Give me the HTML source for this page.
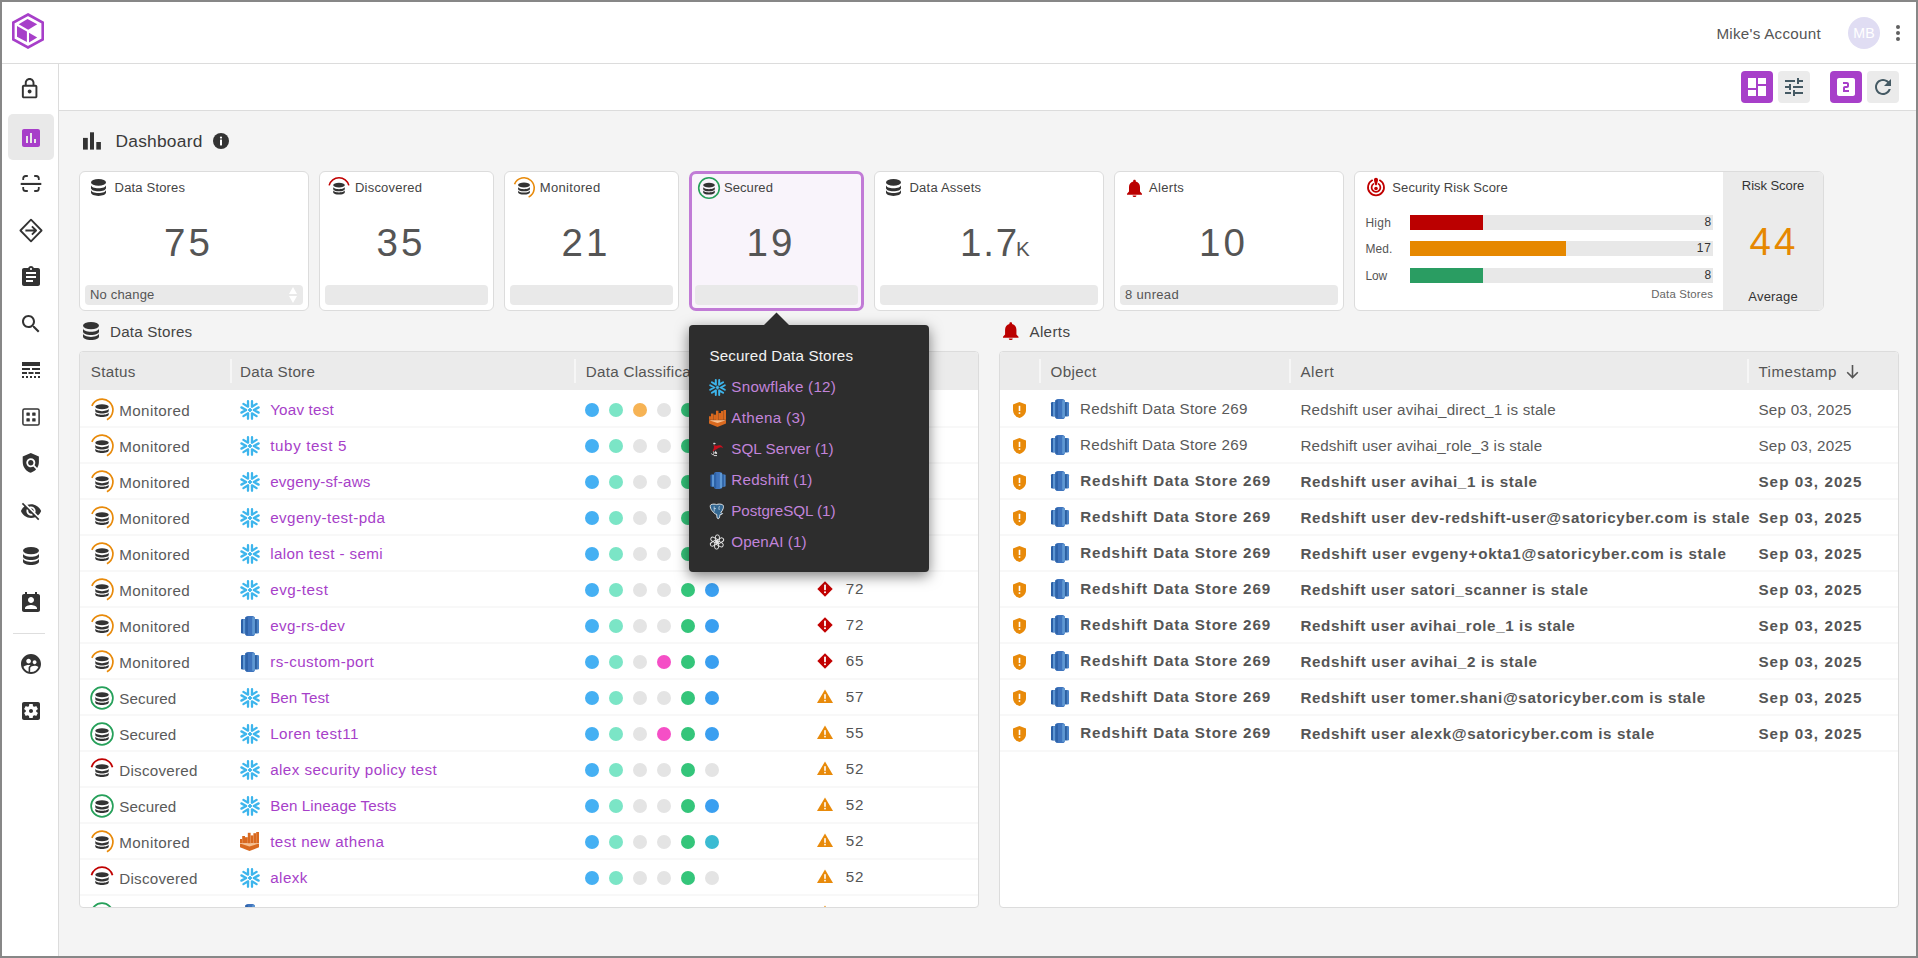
<!DOCTYPE html><html><head><meta charset="utf-8"><title>Dashboard</title><style>*{box-sizing:border-box;margin:0;padding:0}html,body{width:1918px;height:958px;overflow:hidden}body{position:relative;font-family:"Liberation Sans",sans-serif;background:#fff;color:#444;-webkit-font-smoothing:antialiased}.a{position:absolute}.t{white-space:nowrap}svg.a{overflow:visible}</style></head><body><div class="a" style="left:59px;top:111px;width:1859px;height:847px;background:#f4f4f4;"></div><div class="a" style="left:0px;top:63px;width:1918px;height:1px;background:#dcdcdc;"></div><div class="a" style="left:58px;top:64px;width:1px;height:894px;background:#dcdcdc;"></div><div class="a" style="left:59px;top:110px;width:1859px;height:1px;background:#dcdcdc;"></div><svg class="a" style="left:12px;top:13px;" width="32" height="36" viewBox="0 0 32 36"><path d="M16 1.5L30.7 9.6V26.4L16 34.5 1.3 26.4V9.6z" fill="none" stroke="#a73fc9" stroke-width="2.6" stroke-linejoin="miter"/><g fill="#a73fc9"><path d="M6.7 11.3L15.5 6 25.2 11.3 16.2 16.7z"/><path d="M5 13L14.9 18.5V29L5 23.75z"/><path d="M17 19.8L25.2 24.4 17 29.5z"/></g></svg><div class="a t" style="top:23.83px;font-size:15.2px;line-height:20px;color:#555;letter-spacing:0.268px;left:1716.4px;">Mike's Account</div><div class="a" style="left:1848px;top:17px;width:32px;height:32px;background:#e0ddf3;border-radius:50%;"></div><div class="a t" style="top:24.28px;font-size:14.2px;line-height:18px;color:#fff;left:1844.00px;width:40px;text-align:center;">MB</div><div class="a" style="left:1896px;top:24.8px;width:4px;height:4px;background:#606060;border-radius:50%;"></div><div class="a" style="left:1896px;top:31px;width:4px;height:4px;background:#606060;border-radius:50%;"></div><div class="a" style="left:1896px;top:37.1px;width:4px;height:4px;background:#606060;border-radius:50%;"></div><div class="a" style="left:1741px;top:71px;width:32px;height:32px;background:#a73fc9;border-radius:4px;"></div><svg class="a" style="left:1745px;top:75.3px" width="24.00" height="24.00" viewBox="0 0 24 24"><path d="M3 13h8V3H3v10zm0 8h8v-6H3v6zm10 0h8V11h-8v10zm0-18v6h8V3h-8z" fill="#fff"/></svg><div class="a" style="left:1778px;top:71px;width:32px;height:32px;background:#ebebeb;border-radius:4px;"></div><svg class="a" style="left:1782px;top:75px" width="24.00" height="24.00" viewBox="0 0 24 24"><path d="M3 17v2h6v-2H3zM3 5v2h10V5H3zm10 16v-2h8v-2h-8v-2h-2v6h2zM7 9v2H3v2h4v2h2V9H7zm14 4v-2H11v2h10zm-6-4h2V7h4V5h-4V3h-2v6z" fill="#455a64"/></svg><div class="a" style="left:1830px;top:71px;width:32px;height:32px;background:#a73fc9;border-radius:4px;"></div><svg class="a" style="left:1834px;top:75.3px" width="24.00" height="24.00" viewBox="0 0 24 24"><path d="M19 3H5c-1.1 0-1.99.9-1.99 2L3 19c0 1.1.9 2 2 2h14c1.1 0 2-.9 2-2V5c0-1.1-.9-2-2-2zm-4 8c0 1.11-.9 2-2 2h-2v2h4v2H9v-4c0-1.11.9-2 2-2h2V9H9V7h4c1.1 0 2 .89 2 2v2z" fill="#fff"/></svg><div class="a" style="left:1867px;top:71px;width:32px;height:32px;background:#ebebeb;border-radius:4px;"></div><svg class="a" style="left:1870.75px;top:75px" width="24.00" height="24.00" viewBox="0 0 24 24"><path d="M17.65 6.35C16.2 4.9 14.21 4 12 4c-4.42 0-7.99 3.58-7.99 8s3.57 8 7.99 8c3.73 0 6.84-2.55 7.73-6h-2.08c-.82 2.33-3.04 4-5.65 4-3.31 0-6-2.69-6-6s2.69-6 6-6c1.66 0 3.14.69 4.22 1.78L13 11h7V4l-2.35 2.35z" fill="#455a64"/></svg><div class="a" style="left:8px;top:114px;width:46px;height:46px;background:#e9e9e9;border-radius:5px;"></div><svg class="a" style="left:18.2px;top:77.2px" width="23.28" height="23.28" viewBox="0 0 24 24"><path d="M18 8h-1V6c0-2.76-2.24-5-5-5S7 3.24 7 6v2H6c-1.1 0-2 .9-2 2v10c0 1.1.9 2 2 2h12c1.1 0 2-.9 2-2V10c0-1.1-.9-2-2-2zM9 6c0-1.66 1.34-3 3-3s3 1.34 3 3v2H9V6zm9 14H6V10h12v10zm-6-3c1.1 0 2-.9 2-2s-.9-2-2-2-2 .9-2 2 .9 2 2 2z" fill="#333"/></svg><svg class="a" style="left:19px;top:126px" width="24.00" height="24.00" viewBox="0 0 24 24"><path d="M19 3H5c-1.1 0-2 .9-2 2v14c0 1.1.9 2 2 2h14c1.1 0 2-.9 2-2V5c0-1.1-.9-2-2-2zM9 17H7v-7h2v7zm4 0h-2V7h2v10zm4 0h-2v-4h2v4z" fill="#a73fc9"/></svg><svg class="a" style="left:20px;top:174px;" width="22" height="20" viewBox="0 0 22 20"><g fill="none" stroke="#333" stroke-width="1.8" stroke-linecap="butt"><path d="M3.2 6V4.6a2.6 2.6 0 0 1 2.6-2.6h2"/><path d="M14.2 2h2a2.6 2.6 0 0 1 2.6 2.6V6"/><path d="M3.2 13v1.4a2.6 2.6 0 0 0 2.6 2.6h2"/><path d="M14.2 17h2a2.6 2.6 0 0 0 2.6-2.6V13"/></g><rect x="0.7" y="8.9" width="20.6" height="2.1" fill="#333"/></svg><svg class="a" style="left:19px;top:218px;" width="24" height="26" viewBox="0 0 24 26"><g fill="none" stroke="#333" stroke-width="1.8" stroke-linejoin="round" stroke-linecap="butt"><path d="M12 1.6L22.6 12.5 12 23.4 1.4 12.5z"/><path d="M6.4 12.5h10.4M12.9 8.3l4.2 4.2-4.2 4.2"/></g></svg><svg class="a" style="left:19px;top:265px" width="24.00" height="24.00" viewBox="0 0 24 24"><path d="M19 3h-4.18C14.4 1.84 13.3 1 12 1c-1.3 0-2.4.84-2.82 2H5c-1.1 0-2 .9-2 2v14c0 1.1.9 2 2 2h14c1.1 0 2-.9 2-2V5c0-1.1-.9-2-2-2zm-7 0c.55 0 1 .45 1 1s-.45 1-1 1-1-.45-1-1 .45-1 1-1zm2 14H7v-2h7v2zm3-4H7v-2h10v2zm0-4H7V7h10v2z" fill="#333"/></svg><svg class="a" style="left:18.8px;top:311.8px" width="24.00" height="24.00" viewBox="0 0 24 24"><path d="M15.5 14h-.79l-.28-.27C15.41 12.59 16 11.11 16 9.5 16 5.91 13.09 3 9.5 3S3 5.91 3 9.5 5.91 16 9.5 16c1.61 0 3.09-.59 4.23-1.57l.27.28v.79l5 4.99L20.49 19l-4.99-5zm-6 0C7.01 14 5 11.99 5 9.5S7.01 5 9.5 5 14 7.01 14 9.5 11.99 14 9.5 14z" fill="#333"/></svg><svg class="a" style="left:19px;top:358px" width="24.00" height="24.00" viewBox="0 0 24 24"><path d="M3 16h5v-2H3v2zm6.5 0h5v-2h-5v2zm6.5 0h5v-2h-5v2zM3 20h2v-2H3v2zm4 0h2v-2H7v2zm4 0h2v-2h-2v2zm4 0h2v-2h-2v2zm4 0h2v-2h-2v2zM3 12h8v-2H3v2zm10 0h8v-2h-8v2zM3 4v4h18V4H3z" fill="#333"/></svg><svg class="a" style="left:21px;top:407px;" width="20" height="20" viewBox="0 0 20 20"><rect x="1.9" y="1.9" width="16.2" height="16.2" rx="1.6" fill="none" stroke="#333" stroke-width="1.5"/><g fill="#333"><rect x="5.4" y="5.4" width="3.4" height="3.4" rx="0.6"/><rect x="11.2" y="5.4" width="3.4" height="3.4" rx="0.6"/><rect x="5.4" y="11.2" width="3.4" height="3.4" rx="0.6"/><rect x="11.2" y="11.2" width="3.4" height="3.4" rx="0.6"/></g></svg><svg class="a" style="left:20.1px;top:451.9px" width="21.60" height="21.60" viewBox="0 0 24 24"><path d="M21 5l-9-4-9 4v6c0 5.55 3.84 10.74 9 12 2.3-.56 4.33-1.9 5.88-3.71l-3.12-3.12c-1.94 1.29-4.58 1.07-6.29-.64-1.95-1.95-1.95-5.12 0-7.07 1.95-1.95 5.12-1.95 7.07 0 1.71 1.71 1.92 4.35.64 6.29l2.9 2.9C20.29 15.69 21 13.38 21 11V5zM12 15c1.66 0 3-1.34 3-3s-1.34-3-3-3-3 1.34-3 3 1.34 3 3 3z" fill="#333"/></svg><svg class="a" style="left:19.8px;top:499.5px" width="22.08" height="22.08" viewBox="0 0 24 24"><path d="M12 7c2.76 0 5 2.24 5 5 0 .65-.13 1.26-.36 1.83l2.92 2.92c1.51-1.26 2.7-2.89 3.43-4.75-1.73-4.39-6-7.5-10.99-7.5-1.4 0-2.74.25-3.98.7l2.16 2.16C10.74 7.13 11.35 7 12 7zM2 4.27l2.28 2.28.46.46C3.08 8.3 1.78 10.02 1 12c1.730 4.39 6 7.5 11 7.5 1.55 0 3.03-.3 4.38-.84l.42.42L19.73 22 21 20.73 3.27 3 2 4.27zM7.53 9.8l1.55 1.55c-.05.21-.08.43-.08.65 0 1.66 1.34 3 3 3 .22 0 .44-.03.65-.08l1.55 1.55c-.67.33-1.41.53-2.2.53-2.760 0-5-2.24-5-5 0-.79.2-1.53.53-2.2zm4.31-.78l3.15 3.150.02-.16c0-1.66-1.34-3-3-3l-.17.01z" fill="#333"/></svg><svg class="a" style="left:23px;top:547px;" width="16" height="18" viewBox="0 0 16 18"><g fill="#333"><ellipse cx="8" cy="3.6" rx="8" ry="3.6"/><path d="M0 6.2v3.3c0 2 3.6 3.6 8 3.6s8-1.6 8-3.6V6.2c0 2-3.6 3.6-8 3.6S0 8.2 0 6.2z"/><path d="M0 11.3v3.1c0 2 3.6 3.6 8 3.6s8-1.6 8-3.6v-3.1c0 2-3.6 3.6-8 3.6S0 13.3 0 11.3z"/></g></svg><svg class="a" style="left:19px;top:590.8px" width="24.00" height="24.00" viewBox="0 0 24 24"><path d="M19 3h-1V1h-2v2H8V1H6v2H5c-1.11 0-2 .9-2 2v14c0 1.1.89 2 2 2h14c1.1 0 2-.9 2-2V5c0-1.1-.9-2-2-2zm-7 3c1.66 0 3 1.34 3 3s-1.34 3-3 3-3-1.34-3-3 1.34-3 3-3zm6 12H6v-1c0-2 4-3.1 6-3.1s6 1.1 6 3.1v1z" fill="#333"/></svg><div class="a" style="left:13px;top:633px;width:32px;height:1px;background:#dedede;"></div><svg class="a" style="left:19px;top:651.9px" width="24.00" height="24.00" viewBox="0 0 24 24"><path d="M11.99 2c-5.52 0-10 4.48-10 10s4.48 10 10 10 10-4.48 10-10-4.48-10-10-10zm3.61 6.34c1.07 0 1.930.86 1.93 1.93 0 1.07-.86 1.93-1.93 1.93-1.07 0-1.93-.86-1.93-1.93-.01-1.07.86-1.93 1.93-1.93zm-6-1.58c1.3 0 2.36 1.06 2.36 2.36 0 1.3-1.06 2.36-2.36 2.36s-2.36-1.06-2.36-2.36c0-1.31 1.05-2.36 2.36-2.36zm0 9.13v3.75c-2.4-.75-4.3-2.6-5.14-4.96 1.05-1.12 3.670-1.69 5.14-1.69.53 0 1.2.08 1.9.22-1.64.87-1.9 2.02-1.9 2.68zM11.99 20c-.27 0-.53-.01-.79-.04v-4.07c0-1.42 2.94-2.13 4.4-2.13 1.07 0 2.92.39 3.84 1.15-1.17 2.96-4.05 5.060-7.45 5.09z" fill="#333"/></svg><svg class="a" style="left:19px;top:699px" width="24.00" height="24.00" viewBox="0 0 24 24"><path d="M12 10c-1.1 0-2 .9-2 2s.9 2 2 2 2-.9 2-2-.9-2-2-2zm7-7H5c-1.11 0-2 .9-2 2v14c0 1.1.89 2 2 2h14c1.11 0 2-.9 2-2V5c0-1.1-.89-2-2-2zm-1.75 9c0 .23-.02.46-.05.68l1.48 1.16c.13.11.17.3.08.45l-1.4 2.42c-.09.15-.27.21-.43.15l-1.74-.7c-.36.28-.76.51-1.18.69l-.26 1.85c-.03.17-.18.3-.35.3h-2.8c-.17 0-.32-.13-.35-.29l-.26-1.85c-.43-.18-.82-.41-1.18-.69l-1.74.7c-.16.06-.34 0-.43-.15l-1.4-2.42c-.09-.15-.05-.34.08-.45l1.48-1.16c-.03-.23-.05-.46-.05-.69 0-.23.02-.46.05-.68l-1.48-1.16c-.13-.11-.17-.3-.08-.45l1.4-2.42c.09-.15.27-.21.43-.15l1.74.7c.36-.28.76-.51 1.18-.69l.26-1.85c.03-.17.18-.3.35-.3h2.8c.17 0 .32.13.35.29l.26 1.85c.43.18.82.41 1.18.69l1.74-.7c.16-.06.34 0 .43.15l1.4 2.42c.09.15.05.34-.08.45l-1.48 1.16c.03.23.05.46.05.69z" fill="#333"/></svg><svg class="a" style="left:83px;top:132px;" width="18" height="18" viewBox="0 0 18 18"><g fill="#333"><rect x="0" y="5.9" width="4.8" height="11.7"/><rect x="7" y="0.3" width="4" height="17.3"/><rect x="13.3" y="10" width="4.6" height="7.6"/></g></svg><div class="a t" style="top:129.78px;font-size:17.38px;line-height:23px;color:#3a3a3a;letter-spacing:0.234px;left:115.5px;">Dashboard</div><svg class="a" style="left:213px;top:132.8px;" width="16" height="16" viewBox="0 0 16 16"><circle cx="8" cy="8" r="8" fill="#333"/><rect x="7" y="6.6" width="2" height="5.8" rx="0.4" fill="#fff"/><circle cx="8" cy="4.6" r="1.1" fill="#fff"/></svg><div class="a" style="left:79px;top:171px;width:230px;height:140px;background:#fff;border:1px solid #dcdcdc;border-radius:6px;"></div><svg class="a" style="left:91px;top:179px;" width="15" height="17" viewBox="0 0 16 18"><g fill="#333"><ellipse cx="8" cy="3.6" rx="8" ry="3.6"/><path d="M0 6.2v3.3c0 2 3.6 3.6 8 3.6s8-1.6 8-3.6V6.2c0 2-3.6 3.6-8 3.6S0 8.2 0 6.2z"/><path d="M0 11.3v3.1c0 2 3.6 3.6 8 3.6s8-1.6 8-3.6v-3.1c0 2-3.6 3.6-8 3.6S0 13.3 0 11.3z"/></g></svg><div class="a t" style="top:179.19px;font-size:13.03px;line-height:17px;color:#444;letter-spacing:0.17px;left:114.6px;">Data Stores</div><div class="a t" style="top:217.65px;font-size:38.52px;line-height:50px;color:#555;letter-spacing:2.969px;left:127.00px;width:120px;text-align:center;text-indent:2.969px;">75</div><div class="a" style="left:85px;top:285px;width:218px;height:20px;background:#e9e9e9;border-radius:4px;"></div><div class="a t" style="top:285.99px;font-size:13.03px;line-height:17px;color:#555;letter-spacing:0.166px;left:90px;">No change</div><div class="a" style="left:319px;top:171px;width:175px;height:140px;background:#fff;border:1px solid #dcdcdc;border-radius:6px;"></div><svg class="a" style="left:325.7px;top:175.0px;" width="26" height="26" viewBox="0 0 26 26"><path d="M3.15 10.36A10.2 10.2 0 0 1 22.85 10.36" fill="none" stroke="#c00000" stroke-width="1.6"/><g transform="translate(7.20 7.70) scale(0.725 0.656)" fill="#333"><ellipse cx="8" cy="3.6" rx="8" ry="3.6"/><path d="M0 6.2v3.3c0 2 3.6 3.6 8 3.6s8-1.6 8-3.6V6.2c0 2-3.6 3.6-8 3.6S0 8.2 0 6.2z"/><path d="M0 11.3v3.1c0 2 3.6 3.6 8 3.6s8-1.6 8-3.6v-3.1c0 2-3.6 3.6-8 3.6S0 13.3 0 11.3z"/></g></svg><div class="a t" style="top:179.19px;font-size:13.03px;line-height:17px;color:#444;letter-spacing:0.201px;left:355px;">Discovered</div><div class="a t" style="top:217.65px;font-size:38.52px;line-height:50px;color:#555;letter-spacing:2.969px;left:339.50px;width:120px;text-align:center;text-indent:2.969px;">35</div><div class="a" style="left:325px;top:285px;width:163px;height:20px;background:#e9e9e9;border-radius:4px;"></div><div class="a" style="left:504px;top:171px;width:175px;height:140px;background:#fff;border:1px solid #dcdcdc;border-radius:6px;"></div><svg class="a" style="left:510.70000000000005px;top:174.5px;" width="26" height="26" viewBox="0 0 26 26"><path d="M3.54 9.18A10.2 10.2 0 1 1 17.63 22.09" fill="none" stroke="#e88a0a" stroke-width="1.6"/><g transform="translate(7.10 7.60) scale(0.738 0.667)" fill="#333"><ellipse cx="8" cy="3.6" rx="8" ry="3.6"/><path d="M0 6.2v3.3c0 2 3.6 3.6 8 3.6s8-1.6 8-3.6V6.2c0 2-3.6 3.6-8 3.6S0 8.2 0 6.2z"/><path d="M0 11.3v3.1c0 2 3.6 3.6 8 3.6s8-1.6 8-3.6v-3.1c0 2-3.6 3.6-8 3.6S0 13.3 0 11.3z"/></g></svg><div class="a t" style="top:179.19px;font-size:13.03px;line-height:17px;color:#444;letter-spacing:0.309px;left:539.8px;">Monitored</div><div class="a t" style="top:217.65px;font-size:38.52px;line-height:50px;color:#555;letter-spacing:2.969px;left:524.50px;width:120px;text-align:center;text-indent:2.969px;">21</div><div class="a" style="left:510px;top:285px;width:163px;height:20px;background:#e9e9e9;border-radius:4px;"></div><div class="a" style="left:689px;top:171px;width:175px;height:140px;background:#f9f4fb;border:3px solid #c17bd6;border-radius:7px;"></div><svg class="a" style="left:695.8px;top:175.0px;" width="26" height="26" viewBox="0 0 26 26"><circle cx="13.0" cy="13.0" r="10.3" fill="none" stroke="#26a05a" stroke-width="1.6"/><g transform="translate(7.20 7.70) scale(0.725 0.656)" fill="#333"><ellipse cx="8" cy="3.6" rx="8" ry="3.6"/><path d="M0 6.2v3.3c0 2 3.6 3.6 8 3.6s8-1.6 8-3.6V6.2c0 2-3.6 3.6-8 3.6S0 8.2 0 6.2z"/><path d="M0 11.3v3.1c0 2 3.6 3.6 8 3.6s8-1.6 8-3.6v-3.1c0 2-3.6 3.6-8 3.6S0 13.3 0 11.3z"/></g></svg><div class="a t" style="top:179.19px;font-size:13.03px;line-height:17px;color:#444;letter-spacing:0.065px;left:724px;">Secured</div><div class="a t" style="top:217.65px;font-size:38.52px;line-height:50px;color:#555;letter-spacing:2.969px;left:709.50px;width:120px;text-align:center;text-indent:2.969px;">19</div><div class="a" style="left:695px;top:285px;width:163px;height:20px;background:#e9e9e9;border-radius:4px;"></div><div class="a" style="left:874px;top:171px;width:230px;height:140px;background:#fff;border:1px solid #dcdcdc;border-radius:6px;"></div><svg class="a" style="left:886px;top:179px;" width="15" height="17" viewBox="0 0 16 18"><g fill="#333"><ellipse cx="8" cy="3.6" rx="8" ry="3.6"/><path d="M0 6.2v3.3c0 2 3.6 3.6 8 3.6s8-1.6 8-3.6V6.2c0 2-3.6 3.6-8 3.6S0 8.2 0 6.2z"/><path d="M0 11.3v3.1c0 2 3.6 3.6 8 3.6s8-1.6 8-3.6v-3.1c0 2-3.6 3.6-8 3.6S0 13.3 0 11.3z"/></g></svg><div class="a t" style="top:179.19px;font-size:13.03px;line-height:17px;color:#444;letter-spacing:0.208px;left:909.5px;">Data Assets</div><div class="a t" style="top:217.65px;font-size:38.52px;line-height:50px;color:#555;letter-spacing:1.859px;left:960px;">1.7</div><div class="a t" style="top:235.35px;font-size:20.63px;line-height:27px;color:#555;letter-spacing:-1.297px;left:1016px;">K</div><div class="a" style="left:880px;top:285px;width:218px;height:20px;background:#e9e9e9;border-radius:4px;"></div><div class="a" style="left:1114px;top:171px;width:230px;height:140px;background:#fff;border:1px solid #dcdcdc;border-radius:6px;"></div><svg class="a" style="left:1126.5px;top:179px;" width="15" height="18" viewBox="0 0 15 18"><g fill="#bb0000"><path d="M7.5 0.8c0.8 0 1.3 0.5 1.3 1.2v0.4c2.6 0.6 4.2 2.8 4.2 5.5v4.6l2 2.3v0.9H0v-0.9l2-2.3V7.9c0-2.7 1.6-4.9 4.2-5.5V2c0-0.7 0.5-1.2 1.3-1.2z"/><path d="M5.6 16.4h3.8c0 1-0.9 1.6-1.9 1.6s-1.9-0.6-1.9-1.6z"/></g></svg><div class="a t" style="top:179.19px;font-size:13.03px;line-height:17px;color:#444;letter-spacing:0.309px;left:1149px;">Alerts</div><div class="a t" style="top:217.65px;font-size:38.52px;line-height:50px;color:#555;letter-spacing:2.969px;left:1162.00px;width:120px;text-align:center;text-indent:2.969px;">10</div><div class="a" style="left:1120px;top:285px;width:218px;height:20px;background:#e9e9e9;border-radius:4px;"></div><div class="a t" style="top:285.99px;font-size:13.03px;line-height:17px;color:#555;letter-spacing:0.328px;left:1125px;">8 unread</div><svg class="a" style="left:288px;top:286px;" width="10" height="18" viewBox="0 0 10 18"><path d="M5 1L9 8H1z" fill="#fff"/><path d="M5 17L9 10H1z" fill="#fff"/></svg><div class="a" style="left:1354px;top:171px;width:470px;height:140px;background:#fff;border:1px solid #dcdcdc;border-radius:6px;"></div><div class="a" style="left:1723px;top:172px;width:100px;height:138px;background:#ebebeb;border-radius:0 5px 5px 0;"></div><svg class="a" style="left:1366px;top:176.5px;" width="20" height="21" viewBox="0 0 20 21"><g fill="none" stroke="#c00000" stroke-width="1.75" stroke-linecap="round"><path d="M6.2 3.3A8 8 0 1 0 13.8 3.3"/><path d="M7.5 6.9A4.4 4.4 0 1 0 12.5 6.9"/></g><circle cx="10" cy="11.5" r="1.8" fill="#c00000"/><path d="M10 0.8c1.2 0 2 0.8 2 1.9 0 1.3-0.8 3.6-1.3 5.6h-1.4C8.8 6.3 8 4 8 2.7c0-1.1 0.8-1.9 2-1.9z" fill="#c00000"/></svg><div class="a t" style="top:179.19px;font-size:13.03px;line-height:17px;color:#444;letter-spacing:0.102px;left:1392.3px;">Security Risk Score</div><div class="a t" style="top:215.16px;font-size:11.95px;line-height:16px;color:#555;letter-spacing:0.245px;left:1365.5px;">High</div><div class="a" style="left:1410px;top:215px;width:303px;height:15px;background:#e8e8e8;"></div><div class="a" style="left:1410px;top:215px;width:73px;height:15px;background:#bb0000;"></div><div class="a t" style="top:214.06px;font-size:11.95px;line-height:16px;color:#333;letter-spacing:0.359px;left:1671.50px;width:40px;text-align:right;margin-right:-0.359px;">8</div><div class="a t" style="top:241.06px;font-size:11.95px;line-height:16px;color:#555;letter-spacing:0.068px;left:1365.5px;">Med.</div><div class="a" style="left:1410px;top:241px;width:303px;height:15px;background:#e8e8e8;"></div><div class="a" style="left:1410px;top:241px;width:156px;height:15px;background:#e68800;"></div><div class="a t" style="top:240.06px;font-size:11.95px;line-height:16px;color:#333;letter-spacing:0.719px;left:1671.50px;width:40px;text-align:right;margin-right:-0.719px;">17</div><div class="a t" style="top:267.66px;font-size:11.95px;line-height:16px;color:#555;letter-spacing:-0.117px;left:1365.5px;">Low</div><div class="a" style="left:1410px;top:268px;width:303px;height:15px;background:#e8e8e8;"></div><div class="a" style="left:1410px;top:268px;width:73px;height:15px;background:#2a9d62;"></div><div class="a t" style="top:266.66px;font-size:11.95px;line-height:16px;color:#333;letter-spacing:0.359px;left:1671.50px;width:40px;text-align:right;margin-right:-0.359px;">8</div><div class="a t" style="top:286.55px;font-size:11.4px;line-height:15px;color:#666;letter-spacing:0.148px;left:1613.00px;width:100px;text-align:right;margin-right:-0.148px;">Data Stores</div><div class="a t" style="top:177.19px;font-size:13.03px;line-height:17px;color:#333;letter-spacing:-0.071px;left:1723.00px;width:100px;text-align:center;text-indent:-0.071px;">Risk Score</div><div class="a t" style="top:216.65px;font-size:38.52px;line-height:50px;color:#e68800;letter-spacing:2.969px;left:1722.50px;width:100px;text-align:center;text-indent:2.969px;">44</div><div class="a t" style="top:287.99px;font-size:13.03px;line-height:17px;color:#333;letter-spacing:0.172px;left:1723.00px;width:100px;text-align:center;text-indent:0.172px;">Average</div><svg class="a" style="left:83px;top:322px;" width="16" height="18" viewBox="0 0 16 18"><g fill="#333"><ellipse cx="8" cy="3.6" rx="8" ry="3.6"/><path d="M0 6.2v3.3c0 2 3.6 3.6 8 3.6s8-1.6 8-3.6V6.2c0 2-3.6 3.6-8 3.6S0 8.2 0 6.2z"/><path d="M0 11.3v3.1c0 2 3.6 3.6 8 3.6s8-1.6 8-3.6v-3.1c0 2-3.6 3.6-8 3.6S0 13.3 0 11.3z"/></g></svg><div class="a t" style="top:321.73px;font-size:15.2px;line-height:20px;color:#444;letter-spacing:0.198px;left:110px;">Data Stores</div><div class="a" style="left:79px;top:351px;width:900px;height:557px;border:1px solid #dcdcdc;border-radius:4px;background:#fff;overflow:hidden;"><div class="a" style="left:0px;top:0px;width:898px;height:38px;background:#ebebeb;"></div><div class="a t" style="top:9.73px;font-size:15.2px;line-height:20px;color:#555;letter-spacing:0.312px;left:10.700000000000003px;">Status</div><div class="a" style="left:150px;top:7px;width:2px;height:24px;background:#f6f6f6;"></div><div class="a t" style="top:9.73px;font-size:15.2px;line-height:20px;color:#555;letter-spacing:0.253px;left:160px;">Data Store</div><div class="a" style="left:494px;top:7px;width:2px;height:24px;background:#f6f6f6;"></div><div class="a t" style="top:9.73px;font-size:15.2px;line-height:20px;color:#555;letter-spacing:0.263px;left:505.79999999999995px;">Data Classification</div><div class="a t" style="top:9.73px;font-size:15.2px;line-height:20px;color:#555;letter-spacing:-0.167px;left:737px;">Risk</div><div class="a" style="left:0px;top:74px;width:898px;height:2px;background:#f8f8f8;"></div><svg class="a" style="left:9.0px;top:44.69999999999999px;" width="26" height="26" viewBox="0 0 26 26"><path d="M2.89 8.92A10.9 10.9 0 1 1 17.95 22.71" fill="none" stroke="#e88a0a" stroke-width="1.7"/><g transform="translate(6.30 7.20) scale(0.838 0.711)" fill="#333"><ellipse cx="8" cy="3.6" rx="8" ry="3.6"/><path d="M0 6.2v3.3c0 2 3.6 3.6 8 3.6s8-1.6 8-3.6V6.2c0 2-3.6 3.6-8 3.6S0 8.2 0 6.2z"/><path d="M0 11.3v3.1c0 2 3.6 3.6 8 3.6s8-1.6 8-3.6v-3.1c0 2-3.6 3.6-8 3.6S0 13.3 0 11.3z"/></g></svg><div class="a t" style="top:49.03px;font-size:15.2px;line-height:20px;color:#5a5a5a;letter-spacing:0.359px;left:39.3px;">Monitored</div><svg class="a" style="left:160px;top:48px;" width="20" height="20" viewBox="0 0 20 20"><g stroke="#3db5ec" stroke-width="2.3" fill="none" stroke-linecap="round" stroke-linejoin="round"><polyline points="18.61,12.63 13.80,10.00 18.61,7.37"/><polyline points="12.02,18.77 11.90,13.29 16.58,16.14"/><polyline points="3.42,16.14 8.10,13.29 7.98,18.77"/><polyline points="1.39,7.37 6.20,10.00 1.39,12.63"/><polyline points="7.98,1.23 8.10,6.71 3.42,3.86"/><polyline points="16.58,3.86 11.90,6.71 12.02,1.23"/></g><path d="M10 8L12 10 10 12 8 10z" fill="#3db5ec" stroke="#3db5ec" stroke-width="0.8" stroke-linejoin="round"/></svg><div class="a t" style="top:47.73px;font-size:15.2px;line-height:20px;color:#a73fc9;letter-spacing:0.193px;left:190.2px;">Yoav test</div><div class="a" style="left:505px;top:50.69999999999999px;width:14px;height:14px;background:#45b0f3;border-radius:50%;"></div><div class="a" style="left:529px;top:50.69999999999999px;width:14px;height:14px;background:#7be5c6;border-radius:50%;"></div><div class="a" style="left:553px;top:50.69999999999999px;width:14px;height:14px;background:#f6b355;border-radius:50%;"></div><div class="a" style="left:577px;top:50.69999999999999px;width:14px;height:14px;background:#e4e4e4;border-radius:50%;"></div><div class="a" style="left:601px;top:50.69999999999999px;width:14px;height:14px;background:#34c57a;border-radius:50%;"></div><div class="a" style="left:625px;top:50.69999999999999px;width:14px;height:14px;background:#3a9ff0;border-radius:50%;"></div><div class="a" style="left:0px;top:110px;width:898px;height:2px;background:#f8f8f8;"></div><svg class="a" style="left:9.0px;top:80.69999999999999px;" width="26" height="26" viewBox="0 0 26 26"><path d="M2.89 8.92A10.9 10.9 0 1 1 17.95 22.71" fill="none" stroke="#e88a0a" stroke-width="1.7"/><g transform="translate(6.30 7.20) scale(0.838 0.711)" fill="#333"><ellipse cx="8" cy="3.6" rx="8" ry="3.6"/><path d="M0 6.2v3.3c0 2 3.6 3.6 8 3.6s8-1.6 8-3.6V6.2c0 2-3.6 3.6-8 3.6S0 8.2 0 6.2z"/><path d="M0 11.3v3.1c0 2 3.6 3.6 8 3.6s8-1.6 8-3.6v-3.1c0 2-3.6 3.6-8 3.6S0 13.3 0 11.3z"/></g></svg><div class="a t" style="top:85.03px;font-size:15.2px;line-height:20px;color:#5a5a5a;letter-spacing:0.359px;left:39.3px;">Monitored</div><svg class="a" style="left:160px;top:84px;" width="20" height="20" viewBox="0 0 20 20"><g stroke="#3db5ec" stroke-width="2.3" fill="none" stroke-linecap="round" stroke-linejoin="round"><polyline points="18.61,12.63 13.80,10.00 18.61,7.37"/><polyline points="12.02,18.77 11.90,13.29 16.58,16.14"/><polyline points="3.42,16.14 8.10,13.29 7.98,18.77"/><polyline points="1.39,7.37 6.20,10.00 1.39,12.63"/><polyline points="7.98,1.23 8.10,6.71 3.42,3.86"/><polyline points="16.58,3.86 11.90,6.71 12.02,1.23"/></g><path d="M10 8L12 10 10 12 8 10z" fill="#3db5ec" stroke="#3db5ec" stroke-width="0.8" stroke-linejoin="round"/></svg><div class="a t" style="top:83.73px;font-size:15.2px;line-height:20px;color:#a73fc9;letter-spacing:0.616px;left:190.2px;">tuby test 5</div><div class="a" style="left:505px;top:86.69999999999999px;width:14px;height:14px;background:#45b0f3;border-radius:50%;"></div><div class="a" style="left:529px;top:86.69999999999999px;width:14px;height:14px;background:#7be5c6;border-radius:50%;"></div><div class="a" style="left:553px;top:86.69999999999999px;width:14px;height:14px;background:#e4e4e4;border-radius:50%;"></div><div class="a" style="left:577px;top:86.69999999999999px;width:14px;height:14px;background:#e4e4e4;border-radius:50%;"></div><div class="a" style="left:601px;top:86.69999999999999px;width:14px;height:14px;background:#34c57a;border-radius:50%;"></div><div class="a" style="left:625px;top:86.69999999999999px;width:14px;height:14px;background:#3a9ff0;border-radius:50%;"></div><div class="a" style="left:0px;top:146px;width:898px;height:2px;background:#f8f8f8;"></div><svg class="a" style="left:9.0px;top:116.69999999999999px;" width="26" height="26" viewBox="0 0 26 26"><path d="M2.89 8.92A10.9 10.9 0 1 1 17.95 22.71" fill="none" stroke="#e88a0a" stroke-width="1.7"/><g transform="translate(6.30 7.20) scale(0.838 0.711)" fill="#333"><ellipse cx="8" cy="3.6" rx="8" ry="3.6"/><path d="M0 6.2v3.3c0 2 3.6 3.6 8 3.6s8-1.6 8-3.6V6.2c0 2-3.6 3.6-8 3.6S0 8.2 0 6.2z"/><path d="M0 11.3v3.1c0 2 3.6 3.6 8 3.6s8-1.6 8-3.6v-3.1c0 2-3.6 3.6-8 3.6S0 13.3 0 11.3z"/></g></svg><div class="a t" style="top:121.03px;font-size:15.2px;line-height:20px;color:#5a5a5a;letter-spacing:0.359px;left:39.3px;">Monitored</div><svg class="a" style="left:160px;top:120px;" width="20" height="20" viewBox="0 0 20 20"><g stroke="#3db5ec" stroke-width="2.3" fill="none" stroke-linecap="round" stroke-linejoin="round"><polyline points="18.61,12.63 13.80,10.00 18.61,7.37"/><polyline points="12.02,18.77 11.90,13.29 16.58,16.14"/><polyline points="3.42,16.14 8.10,13.29 7.98,18.77"/><polyline points="1.39,7.37 6.20,10.00 1.39,12.63"/><polyline points="7.98,1.23 8.10,6.71 3.42,3.86"/><polyline points="16.58,3.86 11.90,6.71 12.02,1.23"/></g><path d="M10 8L12 10 10 12 8 10z" fill="#3db5ec" stroke="#3db5ec" stroke-width="0.8" stroke-linejoin="round"/></svg><div class="a t" style="top:119.73px;font-size:15.2px;line-height:20px;color:#a73fc9;letter-spacing:0.19px;left:190.2px;">evgeny-sf-aws</div><div class="a" style="left:505px;top:122.69999999999999px;width:14px;height:14px;background:#45b0f3;border-radius:50%;"></div><div class="a" style="left:529px;top:122.69999999999999px;width:14px;height:14px;background:#7be5c6;border-radius:50%;"></div><div class="a" style="left:553px;top:122.69999999999999px;width:14px;height:14px;background:#e4e4e4;border-radius:50%;"></div><div class="a" style="left:577px;top:122.69999999999999px;width:14px;height:14px;background:#e4e4e4;border-radius:50%;"></div><div class="a" style="left:601px;top:122.69999999999999px;width:14px;height:14px;background:#34c57a;border-radius:50%;"></div><div class="a" style="left:625px;top:122.69999999999999px;width:14px;height:14px;background:#3a9ff0;border-radius:50%;"></div><div class="a" style="left:0px;top:182px;width:898px;height:2px;background:#f8f8f8;"></div><svg class="a" style="left:9.0px;top:152.70000000000005px;" width="26" height="26" viewBox="0 0 26 26"><path d="M2.89 8.92A10.9 10.9 0 1 1 17.95 22.71" fill="none" stroke="#e88a0a" stroke-width="1.7"/><g transform="translate(6.30 7.20) scale(0.838 0.711)" fill="#333"><ellipse cx="8" cy="3.6" rx="8" ry="3.6"/><path d="M0 6.2v3.3c0 2 3.6 3.6 8 3.6s8-1.6 8-3.6V6.2c0 2-3.6 3.6-8 3.6S0 8.2 0 6.2z"/><path d="M0 11.3v3.1c0 2 3.6 3.6 8 3.6s8-1.6 8-3.6v-3.1c0 2-3.6 3.6-8 3.6S0 13.3 0 11.3z"/></g></svg><div class="a t" style="top:157.03px;font-size:15.2px;line-height:20px;color:#5a5a5a;letter-spacing:0.359px;left:39.3px;">Monitored</div><svg class="a" style="left:160px;top:156px;" width="20" height="20" viewBox="0 0 20 20"><g stroke="#3db5ec" stroke-width="2.3" fill="none" stroke-linecap="round" stroke-linejoin="round"><polyline points="18.61,12.63 13.80,10.00 18.61,7.37"/><polyline points="12.02,18.77 11.90,13.29 16.58,16.14"/><polyline points="3.42,16.14 8.10,13.29 7.98,18.77"/><polyline points="1.39,7.37 6.20,10.00 1.39,12.63"/><polyline points="7.98,1.23 8.10,6.71 3.42,3.86"/><polyline points="16.58,3.86 11.90,6.71 12.02,1.23"/></g><path d="M10 8L12 10 10 12 8 10z" fill="#3db5ec" stroke="#3db5ec" stroke-width="0.8" stroke-linejoin="round"/></svg><div class="a t" style="top:155.73px;font-size:15.2px;line-height:20px;color:#a73fc9;letter-spacing:0.41px;left:190.2px;">evgeny-test-pda</div><div class="a" style="left:505px;top:158.70000000000005px;width:14px;height:14px;background:#45b0f3;border-radius:50%;"></div><div class="a" style="left:529px;top:158.70000000000005px;width:14px;height:14px;background:#7be5c6;border-radius:50%;"></div><div class="a" style="left:553px;top:158.70000000000005px;width:14px;height:14px;background:#e4e4e4;border-radius:50%;"></div><div class="a" style="left:577px;top:158.70000000000005px;width:14px;height:14px;background:#e4e4e4;border-radius:50%;"></div><div class="a" style="left:601px;top:158.70000000000005px;width:14px;height:14px;background:#34c57a;border-radius:50%;"></div><div class="a" style="left:625px;top:158.70000000000005px;width:14px;height:14px;background:#3a9ff0;border-radius:50%;"></div><div class="a" style="left:0px;top:218px;width:898px;height:2px;background:#f8f8f8;"></div><svg class="a" style="left:9.0px;top:188.70000000000005px;" width="26" height="26" viewBox="0 0 26 26"><path d="M2.89 8.92A10.9 10.9 0 1 1 17.95 22.71" fill="none" stroke="#e88a0a" stroke-width="1.7"/><g transform="translate(6.30 7.20) scale(0.838 0.711)" fill="#333"><ellipse cx="8" cy="3.6" rx="8" ry="3.6"/><path d="M0 6.2v3.3c0 2 3.6 3.6 8 3.6s8-1.6 8-3.6V6.2c0 2-3.6 3.6-8 3.6S0 8.2 0 6.2z"/><path d="M0 11.3v3.1c0 2 3.6 3.6 8 3.6s8-1.6 8-3.6v-3.1c0 2-3.6 3.6-8 3.6S0 13.3 0 11.3z"/></g></svg><div class="a t" style="top:193.03px;font-size:15.2px;line-height:20px;color:#5a5a5a;letter-spacing:0.359px;left:39.3px;">Monitored</div><svg class="a" style="left:160px;top:192px;" width="20" height="20" viewBox="0 0 20 20"><g stroke="#3db5ec" stroke-width="2.3" fill="none" stroke-linecap="round" stroke-linejoin="round"><polyline points="18.61,12.63 13.80,10.00 18.61,7.37"/><polyline points="12.02,18.77 11.90,13.29 16.58,16.14"/><polyline points="3.42,16.14 8.10,13.29 7.98,18.77"/><polyline points="1.39,7.37 6.20,10.00 1.39,12.63"/><polyline points="7.98,1.23 8.10,6.71 3.42,3.86"/><polyline points="16.58,3.86 11.90,6.71 12.02,1.23"/></g><path d="M10 8L12 10 10 12 8 10z" fill="#3db5ec" stroke="#3db5ec" stroke-width="0.8" stroke-linejoin="round"/></svg><div class="a t" style="top:191.73px;font-size:15.2px;line-height:20px;color:#a73fc9;letter-spacing:0.386px;left:190.2px;">lalon test - semi</div><div class="a" style="left:505px;top:194.70000000000005px;width:14px;height:14px;background:#45b0f3;border-radius:50%;"></div><div class="a" style="left:529px;top:194.70000000000005px;width:14px;height:14px;background:#7be5c6;border-radius:50%;"></div><div class="a" style="left:553px;top:194.70000000000005px;width:14px;height:14px;background:#e4e4e4;border-radius:50%;"></div><div class="a" style="left:577px;top:194.70000000000005px;width:14px;height:14px;background:#e4e4e4;border-radius:50%;"></div><div class="a" style="left:601px;top:194.70000000000005px;width:14px;height:14px;background:#34c57a;border-radius:50%;"></div><div class="a" style="left:625px;top:194.70000000000005px;width:14px;height:14px;background:#3a9ff0;border-radius:50%;"></div><div class="a" style="left:0px;top:254px;width:898px;height:2px;background:#f8f8f8;"></div><svg class="a" style="left:9.0px;top:224.70000000000005px;" width="26" height="26" viewBox="0 0 26 26"><path d="M2.89 8.92A10.9 10.9 0 1 1 17.95 22.71" fill="none" stroke="#e88a0a" stroke-width="1.7"/><g transform="translate(6.30 7.20) scale(0.838 0.711)" fill="#333"><ellipse cx="8" cy="3.6" rx="8" ry="3.6"/><path d="M0 6.2v3.3c0 2 3.6 3.6 8 3.6s8-1.6 8-3.6V6.2c0 2-3.6 3.6-8 3.6S0 8.2 0 6.2z"/><path d="M0 11.3v3.1c0 2 3.6 3.6 8 3.6s8-1.6 8-3.6v-3.1c0 2-3.6 3.6-8 3.6S0 13.3 0 11.3z"/></g></svg><div class="a t" style="top:229.03px;font-size:15.2px;line-height:20px;color:#5a5a5a;letter-spacing:0.359px;left:39.3px;">Monitored</div><svg class="a" style="left:160px;top:228px;" width="20" height="20" viewBox="0 0 20 20"><g stroke="#3db5ec" stroke-width="2.3" fill="none" stroke-linecap="round" stroke-linejoin="round"><polyline points="18.61,12.63 13.80,10.00 18.61,7.37"/><polyline points="12.02,18.77 11.90,13.29 16.58,16.14"/><polyline points="3.42,16.14 8.10,13.29 7.98,18.77"/><polyline points="1.39,7.37 6.20,10.00 1.39,12.63"/><polyline points="7.98,1.23 8.10,6.71 3.42,3.86"/><polyline points="16.58,3.86 11.90,6.71 12.02,1.23"/></g><path d="M10 8L12 10 10 12 8 10z" fill="#3db5ec" stroke="#3db5ec" stroke-width="0.8" stroke-linejoin="round"/></svg><div class="a t" style="top:227.73px;font-size:15.2px;line-height:20px;color:#a73fc9;letter-spacing:0.529px;left:190.2px;">evg-test</div><div class="a" style="left:505px;top:230.70000000000005px;width:14px;height:14px;background:#45b0f3;border-radius:50%;"></div><div class="a" style="left:529px;top:230.70000000000005px;width:14px;height:14px;background:#7be5c6;border-radius:50%;"></div><div class="a" style="left:553px;top:230.70000000000005px;width:14px;height:14px;background:#e4e4e4;border-radius:50%;"></div><div class="a" style="left:577px;top:230.70000000000005px;width:14px;height:14px;background:#e4e4e4;border-radius:50%;"></div><div class="a" style="left:601px;top:230.70000000000005px;width:14px;height:14px;background:#34c57a;border-radius:50%;"></div><div class="a" style="left:625px;top:230.70000000000005px;width:14px;height:14px;background:#3a9ff0;border-radius:50%;"></div><svg class="a" style="left:737.3px;top:228.79999999999995px;" width="16" height="16" viewBox="0 0 16 16"><path d="M8 0.3L15.7 8 8 15.7 0.3 8z" fill="#c20000"/><rect x="7.1" y="3.6" width="1.8" height="5.6" rx="0.6" fill="#fff"/><circle cx="8" cy="11.2" r="1" fill="#fff"/></svg><div class="a t" style="top:226.73px;font-size:15.2px;line-height:20px;color:#555;letter-spacing:0.922px;left:765.7px;">72</div><div class="a" style="left:0px;top:290px;width:898px;height:2px;background:#f8f8f8;"></div><svg class="a" style="left:9.0px;top:260.70000000000005px;" width="26" height="26" viewBox="0 0 26 26"><path d="M2.89 8.92A10.9 10.9 0 1 1 17.95 22.71" fill="none" stroke="#e88a0a" stroke-width="1.7"/><g transform="translate(6.30 7.20) scale(0.838 0.711)" fill="#333"><ellipse cx="8" cy="3.6" rx="8" ry="3.6"/><path d="M0 6.2v3.3c0 2 3.6 3.6 8 3.6s8-1.6 8-3.6V6.2c0 2-3.6 3.6-8 3.6S0 8.2 0 6.2z"/><path d="M0 11.3v3.1c0 2 3.6 3.6 8 3.6s8-1.6 8-3.6v-3.1c0 2-3.6 3.6-8 3.6S0 13.3 0 11.3z"/></g></svg><div class="a t" style="top:265.03px;font-size:15.2px;line-height:20px;color:#5a5a5a;letter-spacing:0.359px;left:39.3px;">Monitored</div><svg class="a" style="left:161px;top:264px;" width="18" height="20" viewBox="0 0 18 20"><rect x="0" y="3" width="4.6" height="14.4" rx="1.2" fill="#2b5fa6"/><rect x="2" y="3.2" width="2.6" height="14" fill="#5e97d4"/><rect x="13.6" y="3" width="4.4" height="14.4" rx="1.2" fill="#4a82c6"/><rect x="13.6" y="3.2" width="2.2" height="14" fill="#2c5f9f"/><rect x="4.3" y="0" width="9.6" height="20" rx="2.6" fill="#3f74bd"/><rect x="4.3" y="1.2" width="2.6" height="17.6" fill="#2d62a8"/><rect x="11.2" y="1.2" width="2.7" height="17.6" fill="#5f98d3"/></svg><div class="a t" style="top:263.73px;font-size:15.2px;line-height:20px;color:#a73fc9;letter-spacing:0.332px;left:190.2px;">evg-rs-dev</div><div class="a" style="left:505px;top:266.70000000000005px;width:14px;height:14px;background:#45b0f3;border-radius:50%;"></div><div class="a" style="left:529px;top:266.70000000000005px;width:14px;height:14px;background:#7be5c6;border-radius:50%;"></div><div class="a" style="left:553px;top:266.70000000000005px;width:14px;height:14px;background:#e4e4e4;border-radius:50%;"></div><div class="a" style="left:577px;top:266.70000000000005px;width:14px;height:14px;background:#e4e4e4;border-radius:50%;"></div><div class="a" style="left:601px;top:266.70000000000005px;width:14px;height:14px;background:#34c57a;border-radius:50%;"></div><div class="a" style="left:625px;top:266.70000000000005px;width:14px;height:14px;background:#3a9ff0;border-radius:50%;"></div><svg class="a" style="left:737.3px;top:264.79999999999995px;" width="16" height="16" viewBox="0 0 16 16"><path d="M8 0.3L15.7 8 8 15.7 0.3 8z" fill="#c20000"/><rect x="7.1" y="3.6" width="1.8" height="5.6" rx="0.6" fill="#fff"/><circle cx="8" cy="11.2" r="1" fill="#fff"/></svg><div class="a t" style="top:262.73px;font-size:15.2px;line-height:20px;color:#555;letter-spacing:0.922px;left:765.7px;">72</div><div class="a" style="left:0px;top:326px;width:898px;height:2px;background:#f8f8f8;"></div><svg class="a" style="left:9.0px;top:296.70000000000005px;" width="26" height="26" viewBox="0 0 26 26"><path d="M2.89 8.92A10.9 10.9 0 1 1 17.95 22.71" fill="none" stroke="#e88a0a" stroke-width="1.7"/><g transform="translate(6.30 7.20) scale(0.838 0.711)" fill="#333"><ellipse cx="8" cy="3.6" rx="8" ry="3.6"/><path d="M0 6.2v3.3c0 2 3.6 3.6 8 3.6s8-1.6 8-3.6V6.2c0 2-3.6 3.6-8 3.6S0 8.2 0 6.2z"/><path d="M0 11.3v3.1c0 2 3.6 3.6 8 3.6s8-1.6 8-3.6v-3.1c0 2-3.6 3.6-8 3.6S0 13.3 0 11.3z"/></g></svg><div class="a t" style="top:301.03px;font-size:15.2px;line-height:20px;color:#5a5a5a;letter-spacing:0.359px;left:39.3px;">Monitored</div><svg class="a" style="left:161px;top:300px;" width="18" height="20" viewBox="0 0 18 20"><rect x="0" y="3" width="4.6" height="14.4" rx="1.2" fill="#2b5fa6"/><rect x="2" y="3.2" width="2.6" height="14" fill="#5e97d4"/><rect x="13.6" y="3" width="4.4" height="14.4" rx="1.2" fill="#4a82c6"/><rect x="13.6" y="3.2" width="2.2" height="14" fill="#2c5f9f"/><rect x="4.3" y="0" width="9.6" height="20" rx="2.6" fill="#3f74bd"/><rect x="4.3" y="1.2" width="2.6" height="17.6" fill="#2d62a8"/><rect x="11.2" y="1.2" width="2.7" height="17.6" fill="#5f98d3"/></svg><div class="a t" style="top:299.73px;font-size:15.2px;line-height:20px;color:#a73fc9;letter-spacing:0.425px;left:190.2px;">rs-custom-port</div><div class="a" style="left:505px;top:302.70000000000005px;width:14px;height:14px;background:#45b0f3;border-radius:50%;"></div><div class="a" style="left:529px;top:302.70000000000005px;width:14px;height:14px;background:#7be5c6;border-radius:50%;"></div><div class="a" style="left:553px;top:302.70000000000005px;width:14px;height:14px;background:#e4e4e4;border-radius:50%;"></div><div class="a" style="left:577px;top:302.70000000000005px;width:14px;height:14px;background:#f54fc6;border-radius:50%;"></div><div class="a" style="left:601px;top:302.70000000000005px;width:14px;height:14px;background:#34c57a;border-radius:50%;"></div><div class="a" style="left:625px;top:302.70000000000005px;width:14px;height:14px;background:#3a9ff0;border-radius:50%;"></div><svg class="a" style="left:737.3px;top:300.79999999999995px;" width="16" height="16" viewBox="0 0 16 16"><path d="M8 0.3L15.7 8 8 15.7 0.3 8z" fill="#c20000"/><rect x="7.1" y="3.6" width="1.8" height="5.6" rx="0.6" fill="#fff"/><circle cx="8" cy="11.2" r="1" fill="#fff"/></svg><div class="a t" style="top:298.73px;font-size:15.2px;line-height:20px;color:#555;letter-spacing:0.922px;left:765.7px;">65</div><div class="a" style="left:0px;top:362px;width:898px;height:2px;background:#f8f8f8;"></div><svg class="a" style="left:9.0px;top:332.70000000000005px;" width="26" height="26" viewBox="0 0 26 26"><circle cx="13.0" cy="13.0" r="10.9" fill="none" stroke="#26a05a" stroke-width="1.7"/><g transform="translate(6.30 7.20) scale(0.838 0.711)" fill="#333"><ellipse cx="8" cy="3.6" rx="8" ry="3.6"/><path d="M0 6.2v3.3c0 2 3.6 3.6 8 3.6s8-1.6 8-3.6V6.2c0 2-3.6 3.6-8 3.6S0 8.2 0 6.2z"/><path d="M0 11.3v3.1c0 2 3.6 3.6 8 3.6s8-1.6 8-3.6v-3.1c0 2-3.6 3.6-8 3.6S0 13.3 0 11.3z"/></g></svg><div class="a t" style="top:337.03px;font-size:15.2px;line-height:20px;color:#5a5a5a;letter-spacing:0.076px;left:39.3px;">Secured</div><svg class="a" style="left:160px;top:336px;" width="20" height="20" viewBox="0 0 20 20"><g stroke="#3db5ec" stroke-width="2.3" fill="none" stroke-linecap="round" stroke-linejoin="round"><polyline points="18.61,12.63 13.80,10.00 18.61,7.37"/><polyline points="12.02,18.77 11.90,13.29 16.58,16.14"/><polyline points="3.42,16.14 8.10,13.29 7.98,18.77"/><polyline points="1.39,7.37 6.20,10.00 1.39,12.63"/><polyline points="7.98,1.23 8.10,6.71 3.42,3.86"/><polyline points="16.58,3.86 11.90,6.71 12.02,1.23"/></g><path d="M10 8L12 10 10 12 8 10z" fill="#3db5ec" stroke="#3db5ec" stroke-width="0.8" stroke-linejoin="round"/></svg><div class="a t" style="top:335.73px;font-size:15.2px;line-height:20px;color:#a73fc9;letter-spacing:0.042px;left:190.2px;">Ben Test</div><div class="a" style="left:505px;top:338.70000000000005px;width:14px;height:14px;background:#45b0f3;border-radius:50%;"></div><div class="a" style="left:529px;top:338.70000000000005px;width:14px;height:14px;background:#7be5c6;border-radius:50%;"></div><div class="a" style="left:553px;top:338.70000000000005px;width:14px;height:14px;background:#e4e4e4;border-radius:50%;"></div><div class="a" style="left:577px;top:338.70000000000005px;width:14px;height:14px;background:#e4e4e4;border-radius:50%;"></div><div class="a" style="left:601px;top:338.70000000000005px;width:14px;height:14px;background:#34c57a;border-radius:50%;"></div><div class="a" style="left:625px;top:338.70000000000005px;width:14px;height:14px;background:#3a9ff0;border-radius:50%;"></div><svg class="a" style="left:737px;top:337.20000000000005px;" width="16" height="14" viewBox="0 0 16 14"><path d="M8 0.5L16 14H0z" fill="#e88a0a"/><rect x="7.2" y="5.2" width="1.6" height="4.6" fill="#fff"/><rect x="7.2" y="10.8" width="1.6" height="1.6" fill="#fff"/></svg><div class="a t" style="top:334.73px;font-size:15.2px;line-height:20px;color:#555;letter-spacing:0.922px;left:765.7px;">57</div><div class="a" style="left:0px;top:398px;width:898px;height:2px;background:#f8f8f8;"></div><svg class="a" style="left:9.0px;top:368.70000000000005px;" width="26" height="26" viewBox="0 0 26 26"><circle cx="13.0" cy="13.0" r="10.9" fill="none" stroke="#26a05a" stroke-width="1.7"/><g transform="translate(6.30 7.20) scale(0.838 0.711)" fill="#333"><ellipse cx="8" cy="3.6" rx="8" ry="3.6"/><path d="M0 6.2v3.3c0 2 3.6 3.6 8 3.6s8-1.6 8-3.6V6.2c0 2-3.6 3.6-8 3.6S0 8.2 0 6.2z"/><path d="M0 11.3v3.1c0 2 3.6 3.6 8 3.6s8-1.6 8-3.6v-3.1c0 2-3.6 3.6-8 3.6S0 13.3 0 11.3z"/></g></svg><div class="a t" style="top:373.03px;font-size:15.2px;line-height:20px;color:#5a5a5a;letter-spacing:0.076px;left:39.3px;">Secured</div><svg class="a" style="left:160px;top:372px;" width="20" height="20" viewBox="0 0 20 20"><g stroke="#3db5ec" stroke-width="2.3" fill="none" stroke-linecap="round" stroke-linejoin="round"><polyline points="18.61,12.63 13.80,10.00 18.61,7.37"/><polyline points="12.02,18.77 11.90,13.29 16.58,16.14"/><polyline points="3.42,16.14 8.10,13.29 7.98,18.77"/><polyline points="1.39,7.37 6.20,10.00 1.39,12.63"/><polyline points="7.98,1.23 8.10,6.71 3.42,3.86"/><polyline points="16.58,3.86 11.90,6.71 12.02,1.23"/></g><path d="M10 8L12 10 10 12 8 10z" fill="#3db5ec" stroke="#3db5ec" stroke-width="0.8" stroke-linejoin="round"/></svg><div class="a t" style="top:371.73px;font-size:15.2px;line-height:20px;color:#a73fc9;letter-spacing:0.446px;left:190.2px;">Loren test11</div><div class="a" style="left:505px;top:374.70000000000005px;width:14px;height:14px;background:#45b0f3;border-radius:50%;"></div><div class="a" style="left:529px;top:374.70000000000005px;width:14px;height:14px;background:#7be5c6;border-radius:50%;"></div><div class="a" style="left:553px;top:374.70000000000005px;width:14px;height:14px;background:#e4e4e4;border-radius:50%;"></div><div class="a" style="left:577px;top:374.70000000000005px;width:14px;height:14px;background:#f54fc6;border-radius:50%;"></div><div class="a" style="left:601px;top:374.70000000000005px;width:14px;height:14px;background:#34c57a;border-radius:50%;"></div><div class="a" style="left:625px;top:374.70000000000005px;width:14px;height:14px;background:#3a9ff0;border-radius:50%;"></div><svg class="a" style="left:737px;top:373.20000000000005px;" width="16" height="14" viewBox="0 0 16 14"><path d="M8 0.5L16 14H0z" fill="#e88a0a"/><rect x="7.2" y="5.2" width="1.6" height="4.6" fill="#fff"/><rect x="7.2" y="10.8" width="1.6" height="1.6" fill="#fff"/></svg><div class="a t" style="top:370.73px;font-size:15.2px;line-height:20px;color:#555;letter-spacing:0.922px;left:765.7px;">55</div><div class="a" style="left:0px;top:434px;width:898px;height:2px;background:#f8f8f8;"></div><svg class="a" style="left:9.0px;top:404.70000000000005px;" width="26" height="26" viewBox="0 0 26 26"><path d="M2.47 10.18A10.9 10.9 0 0 1 23.53 10.18" fill="none" stroke="#c00000" stroke-width="1.7"/><g transform="translate(6.30 7.20) scale(0.838 0.711)" fill="#333"><ellipse cx="8" cy="3.6" rx="8" ry="3.6"/><path d="M0 6.2v3.3c0 2 3.6 3.6 8 3.6s8-1.6 8-3.6V6.2c0 2-3.6 3.6-8 3.6S0 8.2 0 6.2z"/><path d="M0 11.3v3.1c0 2 3.6 3.6 8 3.6s8-1.6 8-3.6v-3.1c0 2-3.6 3.6-8 3.6S0 13.3 0 11.3z"/></g></svg><div class="a t" style="top:409.03px;font-size:15.2px;line-height:20px;color:#5a5a5a;letter-spacing:0.234px;left:39.3px;">Discovered</div><svg class="a" style="left:160px;top:408px;" width="20" height="20" viewBox="0 0 20 20"><g stroke="#3db5ec" stroke-width="2.3" fill="none" stroke-linecap="round" stroke-linejoin="round"><polyline points="18.61,12.63 13.80,10.00 18.61,7.37"/><polyline points="12.02,18.77 11.90,13.29 16.58,16.14"/><polyline points="3.42,16.14 8.10,13.29 7.98,18.77"/><polyline points="1.39,7.37 6.20,10.00 1.39,12.63"/><polyline points="7.98,1.23 8.10,6.71 3.42,3.86"/><polyline points="16.58,3.86 11.90,6.71 12.02,1.23"/></g><path d="M10 8L12 10 10 12 8 10z" fill="#3db5ec" stroke="#3db5ec" stroke-width="0.8" stroke-linejoin="round"/></svg><div class="a t" style="top:407.73px;font-size:15.2px;line-height:20px;color:#a73fc9;letter-spacing:0.43px;left:190.2px;">alex security policy test</div><div class="a" style="left:505px;top:410.70000000000005px;width:14px;height:14px;background:#45b0f3;border-radius:50%;"></div><div class="a" style="left:529px;top:410.70000000000005px;width:14px;height:14px;background:#7be5c6;border-radius:50%;"></div><div class="a" style="left:553px;top:410.70000000000005px;width:14px;height:14px;background:#e4e4e4;border-radius:50%;"></div><div class="a" style="left:577px;top:410.70000000000005px;width:14px;height:14px;background:#e4e4e4;border-radius:50%;"></div><div class="a" style="left:601px;top:410.70000000000005px;width:14px;height:14px;background:#34c57a;border-radius:50%;"></div><div class="a" style="left:625px;top:410.70000000000005px;width:14px;height:14px;background:#e4e4e4;border-radius:50%;"></div><svg class="a" style="left:737px;top:409.20000000000005px;" width="16" height="14" viewBox="0 0 16 14"><path d="M8 0.5L16 14H0z" fill="#e88a0a"/><rect x="7.2" y="5.2" width="1.6" height="4.6" fill="#fff"/><rect x="7.2" y="10.8" width="1.6" height="1.6" fill="#fff"/></svg><div class="a t" style="top:406.73px;font-size:15.2px;line-height:20px;color:#555;letter-spacing:0.922px;left:765.7px;">52</div><div class="a" style="left:0px;top:470px;width:898px;height:2px;background:#f8f8f8;"></div><svg class="a" style="left:9.0px;top:440.70000000000005px;" width="26" height="26" viewBox="0 0 26 26"><circle cx="13.0" cy="13.0" r="10.9" fill="none" stroke="#26a05a" stroke-width="1.7"/><g transform="translate(6.30 7.20) scale(0.838 0.711)" fill="#333"><ellipse cx="8" cy="3.6" rx="8" ry="3.6"/><path d="M0 6.2v3.3c0 2 3.6 3.6 8 3.6s8-1.6 8-3.6V6.2c0 2-3.6 3.6-8 3.6S0 8.2 0 6.2z"/><path d="M0 11.3v3.1c0 2 3.6 3.6 8 3.6s8-1.6 8-3.6v-3.1c0 2-3.6 3.6-8 3.6S0 13.3 0 11.3z"/></g></svg><div class="a t" style="top:445.03px;font-size:15.2px;line-height:20px;color:#5a5a5a;letter-spacing:0.076px;left:39.3px;">Secured</div><svg class="a" style="left:160px;top:444px;" width="20" height="20" viewBox="0 0 20 20"><g stroke="#3db5ec" stroke-width="2.3" fill="none" stroke-linecap="round" stroke-linejoin="round"><polyline points="18.61,12.63 13.80,10.00 18.61,7.37"/><polyline points="12.02,18.77 11.90,13.29 16.58,16.14"/><polyline points="3.42,16.14 8.10,13.29 7.98,18.77"/><polyline points="1.39,7.37 6.20,10.00 1.39,12.63"/><polyline points="7.98,1.23 8.10,6.71 3.42,3.86"/><polyline points="16.58,3.86 11.90,6.71 12.02,1.23"/></g><path d="M10 8L12 10 10 12 8 10z" fill="#3db5ec" stroke="#3db5ec" stroke-width="0.8" stroke-linejoin="round"/></svg><div class="a t" style="top:443.73px;font-size:15.2px;line-height:20px;color:#a73fc9;letter-spacing:0.089px;left:190.2px;">Ben Lineage Tests</div><div class="a" style="left:505px;top:446.70000000000005px;width:14px;height:14px;background:#45b0f3;border-radius:50%;"></div><div class="a" style="left:529px;top:446.70000000000005px;width:14px;height:14px;background:#7be5c6;border-radius:50%;"></div><div class="a" style="left:553px;top:446.70000000000005px;width:14px;height:14px;background:#e4e4e4;border-radius:50%;"></div><div class="a" style="left:577px;top:446.70000000000005px;width:14px;height:14px;background:#e4e4e4;border-radius:50%;"></div><div class="a" style="left:601px;top:446.70000000000005px;width:14px;height:14px;background:#34c57a;border-radius:50%;"></div><div class="a" style="left:625px;top:446.70000000000005px;width:14px;height:14px;background:#3a9ff0;border-radius:50%;"></div><svg class="a" style="left:737px;top:445.20000000000005px;" width="16" height="14" viewBox="0 0 16 14"><path d="M8 0.5L16 14H0z" fill="#e88a0a"/><rect x="7.2" y="5.2" width="1.6" height="4.6" fill="#fff"/><rect x="7.2" y="10.8" width="1.6" height="1.6" fill="#fff"/></svg><div class="a t" style="top:442.73px;font-size:15.2px;line-height:20px;color:#555;letter-spacing:0.922px;left:765.7px;">52</div><div class="a" style="left:0px;top:506px;width:898px;height:2px;background:#f8f8f8;"></div><svg class="a" style="left:9.0px;top:476.70000000000005px;" width="26" height="26" viewBox="0 0 26 26"><path d="M2.89 8.92A10.9 10.9 0 1 1 17.95 22.71" fill="none" stroke="#e88a0a" stroke-width="1.7"/><g transform="translate(6.30 7.20) scale(0.838 0.711)" fill="#333"><ellipse cx="8" cy="3.6" rx="8" ry="3.6"/><path d="M0 6.2v3.3c0 2 3.6 3.6 8 3.6s8-1.6 8-3.6V6.2c0 2-3.6 3.6-8 3.6S0 8.2 0 6.2z"/><path d="M0 11.3v3.1c0 2 3.6 3.6 8 3.6s8-1.6 8-3.6v-3.1c0 2-3.6 3.6-8 3.6S0 13.3 0 11.3z"/></g></svg><div class="a t" style="top:481.03px;font-size:15.2px;line-height:20px;color:#5a5a5a;letter-spacing:0.359px;left:39.3px;">Monitored</div><svg class="a" style="left:160px;top:480px;" width="19" height="19" viewBox="0 0 19 19"><g fill="#d9691f"><rect x="0" y="7" width="2.2" height="4"/><rect x="2.2" y="4" width="2.8" height="7"/><rect x="5" y="5.2" width="2.8" height="5.8"/><rect x="7.8" y="0.8" width="2.8" height="10.6"/><rect x="10.6" y="3.4" width="2.8" height="7.6"/><rect x="13.4" y="1.2" width="2.8" height="9.8"/><rect x="16.2" y="0" width="2.8" height="11"/><path d="M0 11.4h19v3.8L9.5 19 0 15.2z"/></g><path d="M0 11.4h19L9.5 14.6z" fill="#f7c190"/></svg><div class="a t" style="top:479.73px;font-size:15.2px;line-height:20px;color:#a73fc9;letter-spacing:0.464px;left:190.2px;">test new athena</div><div class="a" style="left:505px;top:482.70000000000005px;width:14px;height:14px;background:#45b0f3;border-radius:50%;"></div><div class="a" style="left:529px;top:482.70000000000005px;width:14px;height:14px;background:#7be5c6;border-radius:50%;"></div><div class="a" style="left:553px;top:482.70000000000005px;width:14px;height:14px;background:#e4e4e4;border-radius:50%;"></div><div class="a" style="left:577px;top:482.70000000000005px;width:14px;height:14px;background:#e4e4e4;border-radius:50%;"></div><div class="a" style="left:601px;top:482.70000000000005px;width:14px;height:14px;background:#34c57a;border-radius:50%;"></div><div class="a" style="left:625px;top:482.70000000000005px;width:14px;height:14px;background:#3bbbd2;border-radius:50%;"></div><svg class="a" style="left:737px;top:481.20000000000005px;" width="16" height="14" viewBox="0 0 16 14"><path d="M8 0.5L16 14H0z" fill="#e88a0a"/><rect x="7.2" y="5.2" width="1.6" height="4.6" fill="#fff"/><rect x="7.2" y="10.8" width="1.6" height="1.6" fill="#fff"/></svg><div class="a t" style="top:478.73px;font-size:15.2px;line-height:20px;color:#555;letter-spacing:0.922px;left:765.7px;">52</div><div class="a" style="left:0px;top:542px;width:898px;height:2px;background:#f8f8f8;"></div><svg class="a" style="left:9.0px;top:512.7px;" width="26" height="26" viewBox="0 0 26 26"><path d="M2.47 10.18A10.9 10.9 0 0 1 23.53 10.18" fill="none" stroke="#c00000" stroke-width="1.7"/><g transform="translate(6.30 7.20) scale(0.838 0.711)" fill="#333"><ellipse cx="8" cy="3.6" rx="8" ry="3.6"/><path d="M0 6.2v3.3c0 2 3.6 3.6 8 3.6s8-1.6 8-3.6V6.2c0 2-3.6 3.6-8 3.6S0 8.2 0 6.2z"/><path d="M0 11.3v3.1c0 2 3.6 3.6 8 3.6s8-1.6 8-3.6v-3.1c0 2-3.6 3.6-8 3.6S0 13.3 0 11.3z"/></g></svg><div class="a t" style="top:517.03px;font-size:15.2px;line-height:20px;color:#5a5a5a;letter-spacing:0.234px;left:39.3px;">Discovered</div><svg class="a" style="left:160px;top:516px;" width="20" height="20" viewBox="0 0 20 20"><g stroke="#3db5ec" stroke-width="2.3" fill="none" stroke-linecap="round" stroke-linejoin="round"><polyline points="18.61,12.63 13.80,10.00 18.61,7.37"/><polyline points="12.02,18.77 11.90,13.29 16.58,16.14"/><polyline points="3.42,16.14 8.10,13.29 7.98,18.77"/><polyline points="1.39,7.37 6.20,10.00 1.39,12.63"/><polyline points="7.98,1.23 8.10,6.71 3.42,3.86"/><polyline points="16.58,3.86 11.90,6.71 12.02,1.23"/></g><path d="M10 8L12 10 10 12 8 10z" fill="#3db5ec" stroke="#3db5ec" stroke-width="0.8" stroke-linejoin="round"/></svg><div class="a t" style="top:515.73px;font-size:15.2px;line-height:20px;color:#a73fc9;letter-spacing:0.441px;left:190.2px;">alexk</div><div class="a" style="left:505px;top:518.7px;width:14px;height:14px;background:#45b0f3;border-radius:50%;"></div><div class="a" style="left:529px;top:518.7px;width:14px;height:14px;background:#7be5c6;border-radius:50%;"></div><div class="a" style="left:553px;top:518.7px;width:14px;height:14px;background:#e4e4e4;border-radius:50%;"></div><div class="a" style="left:577px;top:518.7px;width:14px;height:14px;background:#e4e4e4;border-radius:50%;"></div><div class="a" style="left:601px;top:518.7px;width:14px;height:14px;background:#34c57a;border-radius:50%;"></div><div class="a" style="left:625px;top:518.7px;width:14px;height:14px;background:#e4e4e4;border-radius:50%;"></div><svg class="a" style="left:737px;top:517.2px;" width="16" height="14" viewBox="0 0 16 14"><path d="M8 0.5L16 14H0z" fill="#e88a0a"/><rect x="7.2" y="5.2" width="1.6" height="4.6" fill="#fff"/><rect x="7.2" y="10.8" width="1.6" height="1.6" fill="#fff"/></svg><div class="a t" style="top:514.73px;font-size:15.2px;line-height:20px;color:#555;letter-spacing:0.922px;left:765.7px;">52</div><svg class="a" style="left:9.0px;top:548.7px;" width="26" height="26" viewBox="0 0 26 26"><circle cx="13.0" cy="13.0" r="10.9" fill="none" stroke="#26a05a" stroke-width="1.7"/><g transform="translate(6.30 7.20) scale(0.838 0.711)" fill="#333"><ellipse cx="8" cy="3.6" rx="8" ry="3.6"/><path d="M0 6.2v3.3c0 2 3.6 3.6 8 3.6s8-1.6 8-3.6V6.2c0 2-3.6 3.6-8 3.6S0 8.2 0 6.2z"/><path d="M0 11.3v3.1c0 2 3.6 3.6 8 3.6s8-1.6 8-3.6v-3.1c0 2-3.6 3.6-8 3.6S0 13.3 0 11.3z"/></g></svg><div class="a t" style="top:553.03px;font-size:15.2px;line-height:20px;color:#5a5a5a;letter-spacing:0.076px;left:39.3px;">Secured</div><svg class="a" style="left:161px;top:552px;" width="18" height="20" viewBox="0 0 18 20"><rect x="0" y="3" width="4.6" height="14.4" rx="1.2" fill="#2b5fa6"/><rect x="2" y="3.2" width="2.6" height="14" fill="#5e97d4"/><rect x="13.6" y="3" width="4.4" height="14.4" rx="1.2" fill="#4a82c6"/><rect x="13.6" y="3.2" width="2.2" height="14" fill="#2c5f9f"/><rect x="4.3" y="0" width="9.6" height="20" rx="2.6" fill="#3f74bd"/><rect x="4.3" y="1.2" width="2.6" height="17.6" fill="#2d62a8"/><rect x="11.2" y="1.2" width="2.7" height="17.6" fill="#5f98d3"/></svg><div class="a" style="left:505px;top:554.7px;width:14px;height:14px;background:#45b0f3;border-radius:50%;"></div><div class="a" style="left:529px;top:554.7px;width:14px;height:14px;background:#7be5c6;border-radius:50%;"></div><div class="a" style="left:553px;top:554.7px;width:14px;height:14px;background:#e4e4e4;border-radius:50%;"></div><div class="a" style="left:577px;top:554.7px;width:14px;height:14px;background:#e4e4e4;border-radius:50%;"></div><div class="a" style="left:601px;top:554.7px;width:14px;height:14px;background:#34c57a;border-radius:50%;"></div><div class="a" style="left:625px;top:554.7px;width:14px;height:14px;background:#3a9ff0;border-radius:50%;"></div><svg class="a" style="left:737px;top:553.2px;" width="16" height="14" viewBox="0 0 16 14"><path d="M8 0.5L16 14H0z" fill="#e88a0a"/><rect x="7.2" y="5.2" width="1.6" height="4.6" fill="#fff"/><rect x="7.2" y="10.8" width="1.6" height="1.6" fill="#fff"/></svg></div><svg class="a" style="left:1003px;top:321.3px;" width="15.5" height="19.6" viewBox="0 0 15 18"><g fill="#bb0000"><path d="M7.5 0.8c0.8 0 1.3 0.5 1.3 1.2v0.4c2.6 0.6 4.2 2.8 4.2 5.5v4.6l2 2.3v0.9H0v-0.9l2-2.3V7.9c0-2.7 1.6-4.9 4.2-5.5V2c0-0.7 0.5-1.2 1.3-1.2z"/><path d="M5.6 16.4h3.8c0 1-0.9 1.6-1.9 1.6s-1.9-0.6-1.9-1.6z"/></g></svg><div class="a t" style="top:321.73px;font-size:15.2px;line-height:20px;color:#444;letter-spacing:0.359px;left:1029.4px;">Alerts</div><div class="a" style="left:999px;top:351px;width:900px;height:557px;border:1px solid #dcdcdc;border-radius:4px;background:#fff;overflow:hidden;"><div class="a" style="left:0px;top:0px;width:898px;height:38px;background:#ebebeb;"></div><div class="a" style="left:39px;top:7px;width:2px;height:24px;background:#f6f6f6;"></div><div class="a" style="left:289px;top:7px;width:2px;height:24px;background:#f6f6f6;"></div><div class="a" style="left:747px;top:7px;width:2px;height:24px;background:#f6f6f6;"></div><div class="a t" style="top:9.73px;font-size:15.2px;line-height:20px;color:#555;letter-spacing:0.341px;left:50.59999999999991px;">Object</div><div class="a t" style="top:9.73px;font-size:15.2px;line-height:20px;color:#555;letter-spacing:0.523px;left:300.4000000000001px;">Alert</div><div class="a t" style="top:9.73px;font-size:15.2px;line-height:20px;color:#555;letter-spacing:0.451px;left:758.4000000000001px;">Timestamp</div><svg class="a" style="left:846px;top:12px;" width="13" height="15" viewBox="0 0 13 15"><path d="M6.5 1v12.5M1.2 8.2l5.3 5.3 5.3-5.3" fill="none" stroke="#555" stroke-width="1.6"/></svg><div class="a" style="left:0px;top:74px;width:898px;height:2px;background:#f8f8f8;"></div><svg class="a" style="left:13px;top:50px;" width="13" height="16" viewBox="0 0 13 16"><path d="M6.5 0L13 2.4v5.6c0 3.9-2.8 6.9-6.5 8-3.7-1.1-6.5-4.1-6.5-8V2.4z" fill="#e88a0a"/><rect x="5.7" y="3.8" width="1.6" height="5.2" fill="#fff"/><rect x="5.7" y="10.3" width="1.6" height="1.6" fill="#fff"/></svg><svg class="a" style="left:51px;top:46.80000000000001px;" width="18" height="20" viewBox="0 0 18 20"><rect x="0" y="3" width="4.6" height="14.4" rx="1.2" fill="#2b5fa6"/><rect x="2" y="3.2" width="2.6" height="14" fill="#5e97d4"/><rect x="13.6" y="3" width="4.4" height="14.4" rx="1.2" fill="#4a82c6"/><rect x="13.6" y="3.2" width="2.2" height="14" fill="#2c5f9f"/><rect x="4.3" y="0" width="9.6" height="20" rx="2.6" fill="#3f74bd"/><rect x="4.3" y="1.2" width="2.6" height="17.6" fill="#2d62a8"/><rect x="11.2" y="1.2" width="2.7" height="17.6" fill="#5f98d3"/></svg><div class="a t" style="top:46.63px;font-size:15.2px;line-height:20px;color:#5a5a5a;letter-spacing:0.238px;left:80px;">Redshift Data Store 269</div><div class="a t" style="top:47.53px;font-size:15.2px;line-height:20px;color:#5a5a5a;letter-spacing:0.213px;left:300.4000000000001px;">Redshift user avihai_direct_1 is stale</div><div class="a t" style="top:47.53px;font-size:15.2px;line-height:20px;color:#5a5a5a;letter-spacing:0.256px;left:758.4000000000001px;">Sep 03, 2025</div><div class="a" style="left:0px;top:110px;width:898px;height:2px;background:#f8f8f8;"></div><svg class="a" style="left:13px;top:86px;" width="13" height="16" viewBox="0 0 13 16"><path d="M6.5 0L13 2.4v5.6c0 3.9-2.8 6.9-6.5 8-3.7-1.1-6.5-4.1-6.5-8V2.4z" fill="#e88a0a"/><rect x="5.7" y="3.8" width="1.6" height="5.2" fill="#fff"/><rect x="5.7" y="10.3" width="1.6" height="1.6" fill="#fff"/></svg><svg class="a" style="left:51px;top:82.80000000000001px;" width="18" height="20" viewBox="0 0 18 20"><rect x="0" y="3" width="4.6" height="14.4" rx="1.2" fill="#2b5fa6"/><rect x="2" y="3.2" width="2.6" height="14" fill="#5e97d4"/><rect x="13.6" y="3" width="4.4" height="14.4" rx="1.2" fill="#4a82c6"/><rect x="13.6" y="3.2" width="2.2" height="14" fill="#2c5f9f"/><rect x="4.3" y="0" width="9.6" height="20" rx="2.6" fill="#3f74bd"/><rect x="4.3" y="1.2" width="2.6" height="17.6" fill="#2d62a8"/><rect x="11.2" y="1.2" width="2.7" height="17.6" fill="#5f98d3"/></svg><div class="a t" style="top:82.63px;font-size:15.2px;line-height:20px;color:#5a5a5a;letter-spacing:0.238px;left:80px;">Redshift Data Store 269</div><div class="a t" style="top:83.53px;font-size:15.2px;line-height:20px;color:#5a5a5a;letter-spacing:0.177px;left:300.4000000000001px;">Redshift user avihai_role_3 is stale</div><div class="a t" style="top:83.53px;font-size:15.2px;line-height:20px;color:#5a5a5a;letter-spacing:0.256px;left:758.4000000000001px;">Sep 03, 2025</div><div class="a" style="left:0px;top:146px;width:898px;height:2px;background:#f8f8f8;"></div><svg class="a" style="left:13px;top:122px;" width="13" height="16" viewBox="0 0 13 16"><path d="M6.5 0L13 2.4v5.6c0 3.9-2.8 6.9-6.5 8-3.7-1.1-6.5-4.1-6.5-8V2.4z" fill="#e88a0a"/><rect x="5.7" y="3.8" width="1.6" height="5.2" fill="#fff"/><rect x="5.7" y="10.3" width="1.6" height="1.6" fill="#fff"/></svg><svg class="a" style="left:51px;top:118.80000000000001px;" width="18" height="20" viewBox="0 0 18 20"><rect x="0" y="3" width="4.6" height="14.4" rx="1.2" fill="#2b5fa6"/><rect x="2" y="3.2" width="2.6" height="14" fill="#5e97d4"/><rect x="13.6" y="3" width="4.4" height="14.4" rx="1.2" fill="#4a82c6"/><rect x="13.6" y="3.2" width="2.2" height="14" fill="#2c5f9f"/><rect x="4.3" y="0" width="9.6" height="20" rx="2.6" fill="#3f74bd"/><rect x="4.3" y="1.2" width="2.6" height="17.6" fill="#2d62a8"/><rect x="11.2" y="1.2" width="2.7" height="17.6" fill="#5f98d3"/></svg><div class="a t" style="top:118.63px;font-size:15.2px;line-height:20px;color:#555;font-weight:700;letter-spacing:0.888px;left:80.20000000000005px;">Redshift Data Store 269</div><div class="a t" style="top:119.53px;font-size:15.2px;line-height:20px;color:#555;font-weight:700;letter-spacing:0.655px;left:300.4000000000001px;">Redshift user avihai_1 is stale</div><div class="a t" style="top:119.53px;font-size:15.2px;line-height:20px;color:#555;font-weight:700;letter-spacing:1.084px;left:758.4000000000001px;">Sep 03, 2025</div><div class="a" style="left:0px;top:182px;width:898px;height:2px;background:#f8f8f8;"></div><svg class="a" style="left:13px;top:158px;" width="13" height="16" viewBox="0 0 13 16"><path d="M6.5 0L13 2.4v5.6c0 3.9-2.8 6.9-6.5 8-3.7-1.1-6.5-4.1-6.5-8V2.4z" fill="#e88a0a"/><rect x="5.7" y="3.8" width="1.6" height="5.2" fill="#fff"/><rect x="5.7" y="10.3" width="1.6" height="1.6" fill="#fff"/></svg><svg class="a" style="left:51px;top:154.8px;" width="18" height="20" viewBox="0 0 18 20"><rect x="0" y="3" width="4.6" height="14.4" rx="1.2" fill="#2b5fa6"/><rect x="2" y="3.2" width="2.6" height="14" fill="#5e97d4"/><rect x="13.6" y="3" width="4.4" height="14.4" rx="1.2" fill="#4a82c6"/><rect x="13.6" y="3.2" width="2.2" height="14" fill="#2c5f9f"/><rect x="4.3" y="0" width="9.6" height="20" rx="2.6" fill="#3f74bd"/><rect x="4.3" y="1.2" width="2.6" height="17.6" fill="#2d62a8"/><rect x="11.2" y="1.2" width="2.7" height="17.6" fill="#5f98d3"/></svg><div class="a t" style="top:154.63px;font-size:15.2px;line-height:20px;color:#555;font-weight:700;letter-spacing:0.888px;left:80.20000000000005px;">Redshift Data Store 269</div><div class="a t" style="top:155.53px;font-size:15.2px;line-height:20px;color:#555;font-weight:700;letter-spacing:0.666px;left:300.4000000000001px;">Redshift user dev-redshift-user@satoricyber.com is stale</div><div class="a t" style="top:155.53px;font-size:15.2px;line-height:20px;color:#555;font-weight:700;letter-spacing:1.084px;left:758.4000000000001px;">Sep 03, 2025</div><div class="a" style="left:0px;top:218px;width:898px;height:2px;background:#f8f8f8;"></div><svg class="a" style="left:13px;top:194px;" width="13" height="16" viewBox="0 0 13 16"><path d="M6.5 0L13 2.4v5.6c0 3.9-2.8 6.9-6.5 8-3.7-1.1-6.5-4.1-6.5-8V2.4z" fill="#e88a0a"/><rect x="5.7" y="3.8" width="1.6" height="5.2" fill="#fff"/><rect x="5.7" y="10.3" width="1.6" height="1.6" fill="#fff"/></svg><svg class="a" style="left:51px;top:190.79999999999995px;" width="18" height="20" viewBox="0 0 18 20"><rect x="0" y="3" width="4.6" height="14.4" rx="1.2" fill="#2b5fa6"/><rect x="2" y="3.2" width="2.6" height="14" fill="#5e97d4"/><rect x="13.6" y="3" width="4.4" height="14.4" rx="1.2" fill="#4a82c6"/><rect x="13.6" y="3.2" width="2.2" height="14" fill="#2c5f9f"/><rect x="4.3" y="0" width="9.6" height="20" rx="2.6" fill="#3f74bd"/><rect x="4.3" y="1.2" width="2.6" height="17.6" fill="#2d62a8"/><rect x="11.2" y="1.2" width="2.7" height="17.6" fill="#5f98d3"/></svg><div class="a t" style="top:190.63px;font-size:15.2px;line-height:20px;color:#555;font-weight:700;letter-spacing:0.888px;left:80.20000000000005px;">Redshift Data Store 269</div><div class="a t" style="top:191.53px;font-size:15.2px;line-height:20px;color:#555;font-weight:700;letter-spacing:0.727px;left:300.4000000000001px;">Redshift user evgeny+okta1@satoricyber.com is stale</div><div class="a t" style="top:191.53px;font-size:15.2px;line-height:20px;color:#555;font-weight:700;letter-spacing:1.084px;left:758.4000000000001px;">Sep 03, 2025</div><div class="a" style="left:0px;top:254px;width:898px;height:2px;background:#f8f8f8;"></div><svg class="a" style="left:13px;top:230px;" width="13" height="16" viewBox="0 0 13 16"><path d="M6.5 0L13 2.4v5.6c0 3.9-2.8 6.9-6.5 8-3.7-1.1-6.5-4.1-6.5-8V2.4z" fill="#e88a0a"/><rect x="5.7" y="3.8" width="1.6" height="5.2" fill="#fff"/><rect x="5.7" y="10.3" width="1.6" height="1.6" fill="#fff"/></svg><svg class="a" style="left:51px;top:226.79999999999995px;" width="18" height="20" viewBox="0 0 18 20"><rect x="0" y="3" width="4.6" height="14.4" rx="1.2" fill="#2b5fa6"/><rect x="2" y="3.2" width="2.6" height="14" fill="#5e97d4"/><rect x="13.6" y="3" width="4.4" height="14.4" rx="1.2" fill="#4a82c6"/><rect x="13.6" y="3.2" width="2.2" height="14" fill="#2c5f9f"/><rect x="4.3" y="0" width="9.6" height="20" rx="2.6" fill="#3f74bd"/><rect x="4.3" y="1.2" width="2.6" height="17.6" fill="#2d62a8"/><rect x="11.2" y="1.2" width="2.7" height="17.6" fill="#5f98d3"/></svg><div class="a t" style="top:226.63px;font-size:15.2px;line-height:20px;color:#555;font-weight:700;letter-spacing:0.888px;left:80.20000000000005px;">Redshift Data Store 269</div><div class="a t" style="top:227.53px;font-size:15.2px;line-height:20px;color:#555;font-weight:700;letter-spacing:0.623px;left:300.4000000000001px;">Redshift user satori_scanner is stale</div><div class="a t" style="top:227.53px;font-size:15.2px;line-height:20px;color:#555;font-weight:700;letter-spacing:1.084px;left:758.4000000000001px;">Sep 03, 2025</div><div class="a" style="left:0px;top:290px;width:898px;height:2px;background:#f8f8f8;"></div><svg class="a" style="left:13px;top:266px;" width="13" height="16" viewBox="0 0 13 16"><path d="M6.5 0L13 2.4v5.6c0 3.9-2.8 6.9-6.5 8-3.7-1.1-6.5-4.1-6.5-8V2.4z" fill="#e88a0a"/><rect x="5.7" y="3.8" width="1.6" height="5.2" fill="#fff"/><rect x="5.7" y="10.3" width="1.6" height="1.6" fill="#fff"/></svg><svg class="a" style="left:51px;top:262.79999999999995px;" width="18" height="20" viewBox="0 0 18 20"><rect x="0" y="3" width="4.6" height="14.4" rx="1.2" fill="#2b5fa6"/><rect x="2" y="3.2" width="2.6" height="14" fill="#5e97d4"/><rect x="13.6" y="3" width="4.4" height="14.4" rx="1.2" fill="#4a82c6"/><rect x="13.6" y="3.2" width="2.2" height="14" fill="#2c5f9f"/><rect x="4.3" y="0" width="9.6" height="20" rx="2.6" fill="#3f74bd"/><rect x="4.3" y="1.2" width="2.6" height="17.6" fill="#2d62a8"/><rect x="11.2" y="1.2" width="2.7" height="17.6" fill="#5f98d3"/></svg><div class="a t" style="top:262.63px;font-size:15.2px;line-height:20px;color:#555;font-weight:700;letter-spacing:0.888px;left:80.20000000000005px;">Redshift Data Store 269</div><div class="a t" style="top:263.53px;font-size:15.2px;line-height:20px;color:#555;font-weight:700;letter-spacing:0.605px;left:300.4000000000001px;">Redshift user avihai_role_1 is stale</div><div class="a t" style="top:263.53px;font-size:15.2px;line-height:20px;color:#555;font-weight:700;letter-spacing:1.084px;left:758.4000000000001px;">Sep 03, 2025</div><div class="a" style="left:0px;top:326px;width:898px;height:2px;background:#f8f8f8;"></div><svg class="a" style="left:13px;top:302px;" width="13" height="16" viewBox="0 0 13 16"><path d="M6.5 0L13 2.4v5.6c0 3.9-2.8 6.9-6.5 8-3.7-1.1-6.5-4.1-6.5-8V2.4z" fill="#e88a0a"/><rect x="5.7" y="3.8" width="1.6" height="5.2" fill="#fff"/><rect x="5.7" y="10.3" width="1.6" height="1.6" fill="#fff"/></svg><svg class="a" style="left:51px;top:298.79999999999995px;" width="18" height="20" viewBox="0 0 18 20"><rect x="0" y="3" width="4.6" height="14.4" rx="1.2" fill="#2b5fa6"/><rect x="2" y="3.2" width="2.6" height="14" fill="#5e97d4"/><rect x="13.6" y="3" width="4.4" height="14.4" rx="1.2" fill="#4a82c6"/><rect x="13.6" y="3.2" width="2.2" height="14" fill="#2c5f9f"/><rect x="4.3" y="0" width="9.6" height="20" rx="2.6" fill="#3f74bd"/><rect x="4.3" y="1.2" width="2.6" height="17.6" fill="#2d62a8"/><rect x="11.2" y="1.2" width="2.7" height="17.6" fill="#5f98d3"/></svg><div class="a t" style="top:298.63px;font-size:15.2px;line-height:20px;color:#555;font-weight:700;letter-spacing:0.888px;left:80.20000000000005px;">Redshift Data Store 269</div><div class="a t" style="top:299.53px;font-size:15.2px;line-height:20px;color:#555;font-weight:700;letter-spacing:0.655px;left:300.4000000000001px;">Redshift user avihai_2 is stale</div><div class="a t" style="top:299.53px;font-size:15.2px;line-height:20px;color:#555;font-weight:700;letter-spacing:1.084px;left:758.4000000000001px;">Sep 03, 2025</div><div class="a" style="left:0px;top:362px;width:898px;height:2px;background:#f8f8f8;"></div><svg class="a" style="left:13px;top:338px;" width="13" height="16" viewBox="0 0 13 16"><path d="M6.5 0L13 2.4v5.6c0 3.9-2.8 6.9-6.5 8-3.7-1.1-6.5-4.1-6.5-8V2.4z" fill="#e88a0a"/><rect x="5.7" y="3.8" width="1.6" height="5.2" fill="#fff"/><rect x="5.7" y="10.3" width="1.6" height="1.6" fill="#fff"/></svg><svg class="a" style="left:51px;top:334.79999999999995px;" width="18" height="20" viewBox="0 0 18 20"><rect x="0" y="3" width="4.6" height="14.4" rx="1.2" fill="#2b5fa6"/><rect x="2" y="3.2" width="2.6" height="14" fill="#5e97d4"/><rect x="13.6" y="3" width="4.4" height="14.4" rx="1.2" fill="#4a82c6"/><rect x="13.6" y="3.2" width="2.2" height="14" fill="#2c5f9f"/><rect x="4.3" y="0" width="9.6" height="20" rx="2.6" fill="#3f74bd"/><rect x="4.3" y="1.2" width="2.6" height="17.6" fill="#2d62a8"/><rect x="11.2" y="1.2" width="2.7" height="17.6" fill="#5f98d3"/></svg><div class="a t" style="top:334.63px;font-size:15.2px;line-height:20px;color:#555;font-weight:700;letter-spacing:0.888px;left:80.20000000000005px;">Redshift Data Store 269</div><div class="a t" style="top:335.53px;font-size:15.2px;line-height:20px;color:#555;font-weight:700;letter-spacing:0.639px;left:300.4000000000001px;">Redshift user tomer.shani@satoricyber.com is stale</div><div class="a t" style="top:335.53px;font-size:15.2px;line-height:20px;color:#555;font-weight:700;letter-spacing:1.084px;left:758.4000000000001px;">Sep 03, 2025</div><div class="a" style="left:0px;top:398px;width:898px;height:2px;background:#f8f8f8;"></div><svg class="a" style="left:13px;top:374px;" width="13" height="16" viewBox="0 0 13 16"><path d="M6.5 0L13 2.4v5.6c0 3.9-2.8 6.9-6.5 8-3.7-1.1-6.5-4.1-6.5-8V2.4z" fill="#e88a0a"/><rect x="5.7" y="3.8" width="1.6" height="5.2" fill="#fff"/><rect x="5.7" y="10.3" width="1.6" height="1.6" fill="#fff"/></svg><svg class="a" style="left:51px;top:370.79999999999995px;" width="18" height="20" viewBox="0 0 18 20"><rect x="0" y="3" width="4.6" height="14.4" rx="1.2" fill="#2b5fa6"/><rect x="2" y="3.2" width="2.6" height="14" fill="#5e97d4"/><rect x="13.6" y="3" width="4.4" height="14.4" rx="1.2" fill="#4a82c6"/><rect x="13.6" y="3.2" width="2.2" height="14" fill="#2c5f9f"/><rect x="4.3" y="0" width="9.6" height="20" rx="2.6" fill="#3f74bd"/><rect x="4.3" y="1.2" width="2.6" height="17.6" fill="#2d62a8"/><rect x="11.2" y="1.2" width="2.7" height="17.6" fill="#5f98d3"/></svg><div class="a t" style="top:370.63px;font-size:15.2px;line-height:20px;color:#555;font-weight:700;letter-spacing:0.888px;left:80.20000000000005px;">Redshift Data Store 269</div><div class="a t" style="top:371.53px;font-size:15.2px;line-height:20px;color:#555;font-weight:700;letter-spacing:0.64px;left:300.4000000000001px;">Redshift user alexk@satoricyber.com is stale</div><div class="a t" style="top:371.53px;font-size:15.2px;line-height:20px;color:#555;font-weight:700;letter-spacing:1.084px;left:758.4000000000001px;">Sep 03, 2025</div></div><div class="a" style="left:689px;top:325px;width:240px;height:247px;background:#2d2d2d;border-radius:4px;box-shadow:0 4px 14px rgba(0,0,0,0.5);"></div><svg class="a" style="left:763px;top:312px;" width="27" height="14" viewBox="0 0 27 14"><path d="M0 14L13.5 0.5 27 14z" fill="#2d2d2d"/></svg><div class="a t" style="top:345.73px;font-size:15.2px;line-height:20px;color:#f2f2f2;letter-spacing:0.148px;left:709.4px;">Secured Data Stores</div><svg class="a" style="left:708.5px;top:378.5px;" width="17" height="17" viewBox="0 0 20 20"><g stroke="#3db5ec" stroke-width="2.3" fill="none" stroke-linecap="round" stroke-linejoin="round"><polyline points="18.61,12.63 13.80,10.00 18.61,7.37"/><polyline points="12.02,18.77 11.90,13.29 16.58,16.14"/><polyline points="3.42,16.14 8.10,13.29 7.98,18.77"/><polyline points="1.39,7.37 6.20,10.00 1.39,12.63"/><polyline points="7.98,1.23 8.10,6.71 3.42,3.86"/><polyline points="16.58,3.86 11.90,6.71 12.02,1.23"/></g><path d="M10 8L12 10 10 12 8 10z" fill="#3db5ec" stroke="#3db5ec" stroke-width="0.8" stroke-linejoin="round"/></svg><div class="a t" style="top:377.23px;font-size:15.2px;line-height:20px;color:#c284da;letter-spacing:0.252px;left:731.3px;">Snowflake (12)</div><svg class="a" style="left:709px;top:409.5px;" width="17" height="17" viewBox="0 0 19 19"><g fill="#d9691f"><rect x="0" y="7" width="2.2" height="4"/><rect x="2.2" y="4" width="2.8" height="7"/><rect x="5" y="5.2" width="2.8" height="5.8"/><rect x="7.8" y="0.8" width="2.8" height="10.6"/><rect x="10.6" y="3.4" width="2.8" height="7.6"/><rect x="13.4" y="1.2" width="2.8" height="9.8"/><rect x="16.2" y="0" width="2.8" height="11"/><path d="M0 11.4h19v3.8L9.5 19 0 15.2z"/></g><path d="M0 11.4h19L9.5 14.6z" fill="#f7c190"/></svg><div class="a t" style="top:408.23px;font-size:15.2px;line-height:20px;color:#c284da;letter-spacing:0.347px;left:731.3px;">Athena (3)</div><svg class="a" style="left:708.5px;top:440.5px;" width="16" height="17" viewBox="0 0 16 17"><path d="M4 2.2c1.2-0.6 2.4-0.4 3 0.4-0.8 0.2-1.6 0.6-2 1.2z" fill="#cfd6d8"/><path d="M4.4 4c1.6 0.4 3.2 1 4.6 0.6 1.2-0.3 2.2-0.6 3.4 0.2 1 0.6 1.4 1.6 1.6 2.4-1-0.8-2-1-3-0.8-1.6 0.3-3 1.4-4.6 2.4-1 0.7-2 1.4-3 2 0.4-1.2 1-2.4 1.4-3.6 0.3-1 0.2-2.2-0.4-3.2z" fill="#c8101e"/><path d="M2.3 12.6c0.6 0.6 1.4 1.2 2.4 1.4M4.5 10.5c0.5 0.9 0.4 2.2 0 3M6.2 10.2c1 0.3 1.6 1.4 1.4 2.8M5 14.6h3" fill="none" stroke="#d8d8d8" stroke-width="1"/><circle cx="6.4" cy="11.8" r="0.9" fill="#f5f5f5"/></svg><div class="a t" style="top:439.23px;font-size:15.2px;line-height:20px;color:#c284da;letter-spacing:0.061px;left:731.3px;">SQL Server (1)</div><svg class="a" style="left:709.5px;top:472.0px;" width="16" height="17" viewBox="0 0 18 20"><rect x="0" y="3" width="4.6" height="14.4" rx="1.2" fill="#2b5fa6"/><rect x="2" y="3.2" width="2.6" height="14" fill="#5e97d4"/><rect x="13.6" y="3" width="4.4" height="14.4" rx="1.2" fill="#4a82c6"/><rect x="13.6" y="3.2" width="2.2" height="14" fill="#2c5f9f"/><rect x="4.3" y="0" width="9.6" height="20" rx="2.6" fill="#3f74bd"/><rect x="4.3" y="1.2" width="2.6" height="17.6" fill="#2d62a8"/><rect x="11.2" y="1.2" width="2.7" height="17.6" fill="#5f98d3"/></svg><div class="a t" style="top:470.23px;font-size:15.2px;line-height:20px;color:#c284da;letter-spacing:0.237px;left:731.3px;">Redshift (1)</div><svg class="a" style="left:708.5px;top:503.2px;" width="16" height="16" viewBox="0 0 16 16"><path d="M2.2 1.6C4 0.9 6 1 7.5 1.6 9.2 0.9 11.8 0.8 13.6 1.8c1 0.6 1 2.2 0.6 3.6-0.5 1.6-1.3 3-2.4 4.2 0.5 0.5 1.3 0.8 1.8 1-0.4 0.8-1.4 1-2.4 0.8-0.4 1.3-0.6 2.6-1 3.6-0.4 0.9-1.6 0.9-2 0-0.3-1-0.4-2.4-0.5-3.6-1.4-0.3-2.6-1-3.4-2.3C2.4 7.3 1.6 5.6 1.3 4 1.1 2.9 1.4 1.9 2.2 1.6z" fill="#336791" stroke="#f2f2f2" stroke-width="0.9" stroke-linejoin="round"/><path d="M5.2 3.4v5.2M5.2 5.6h1.8M10.6 3c-0.8 1-0.9 2.6-0.3 4" fill="none" stroke="#dfe8f0" stroke-width="0.7"/></svg><div class="a t" style="top:501.23px;font-size:15.2px;line-height:20px;color:#c284da;letter-spacing:-0.055px;left:731.3px;">PostgreSQL (1)</div><svg class="a" style="left:708.8px;top:534.2px;" width="16" height="16" viewBox="0 0 16 16"><g fill="none" stroke="#e6e6e6" stroke-width="0.95"><rect x="6.4" y="0.9" width="4" height="7.6" rx="2" transform="rotate(0 8 8)"/><rect x="6.4" y="0.9" width="4" height="7.6" rx="2" transform="rotate(60 8 8)"/><rect x="6.4" y="0.9" width="4" height="7.6" rx="2" transform="rotate(120 8 8)"/><rect x="6.4" y="0.9" width="4" height="7.6" rx="2" transform="rotate(180 8 8)"/><rect x="6.4" y="0.9" width="4" height="7.6" rx="2" transform="rotate(240 8 8)"/><rect x="6.4" y="0.9" width="4" height="7.6" rx="2" transform="rotate(300 8 8)"/></g></svg><div class="a t" style="top:532.23px;font-size:15.2px;line-height:20px;color:#c284da;letter-spacing:0.122px;left:731.3px;">OpenAI (1)</div><div class="a" style="left:0;top:0;width:1918px;height:958px;border:2px solid #878787;"></div></body></html>
